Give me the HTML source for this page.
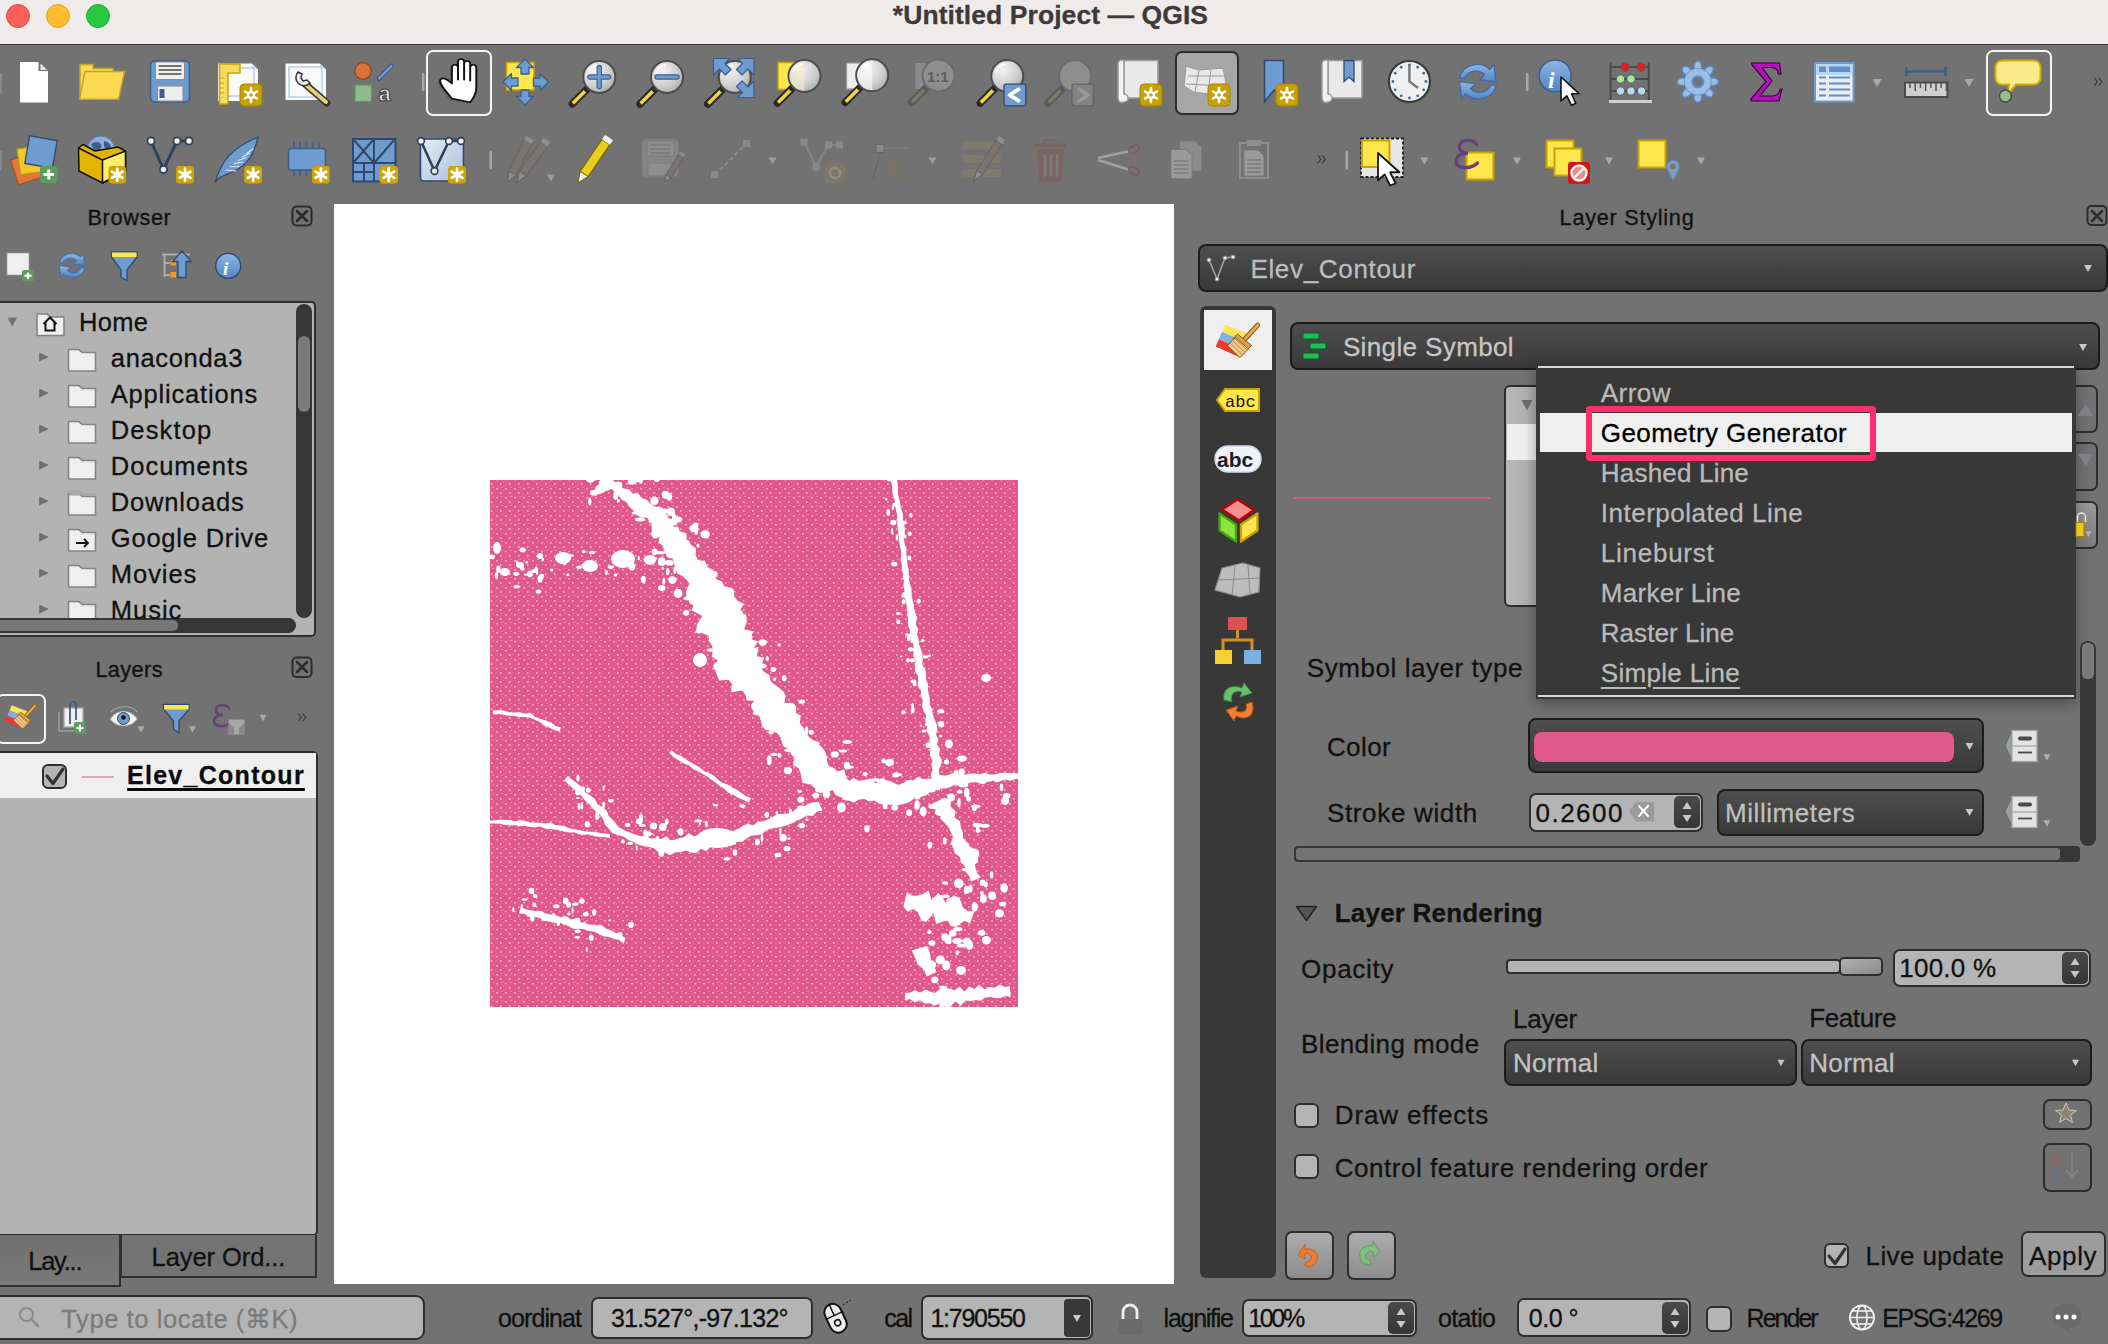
<!DOCTYPE html>
<html><head><meta charset="utf-8">
<title>QGIS</title>
<style>
*{margin:0;padding:0;box-sizing:border-box}
html,body{width:2108px;height:1344px;overflow:hidden}
body{position:relative;background:#727272;font-family:"Liberation Sans",sans-serif;color:#111}
.a{position:absolute}
.t{position:absolute;white-space:nowrap;line-height:1;-webkit-text-stroke:0.3px currentColor}
.tree{position:absolute;background:#b3b3b3;border:2px solid #2f2f2f;border-left:none;border-radius:0 5px 5px 0}
.combo{position:absolute;background:linear-gradient(#4e4e4e,#393939);border:2px solid #1c1c1c;border-radius:8px}
.field{position:absolute;background:#b4b4b4;border:2px solid #2e2e2e;border-radius:7px}
.spin{position:absolute;background:linear-gradient(#4a4a4a,#353535);border-radius:5px}
.cb{position:absolute;width:25px;height:25px;background:#b4b4b4;border:2px solid #2e2e2e;border-radius:6px}
.btn{position:absolute;border:2px solid #2e2e2e;border-radius:7px}
</style></head><body>
<!-- title bar -->
<div class="a" style="left:0;top:0;width:2108px;height:44px;background:#efebeb"></div>
<div class="a" style="left:0;top:44px;width:2108px;height:1px;background:#3a3a3a"></div>
<div class="a" style="left:6px;top:3.7px;width:24px;height:24px;border-radius:50%;background:#fe5f57;border:1px solid #e2463f"></div>
<div class="a" style="left:46px;top:3.7px;width:24px;height:24px;border-radius:50%;background:#febc2e;border:1px solid #e1a325"></div>
<div class="a" style="left:86px;top:3.7px;width:24px;height:24px;border-radius:50%;background:#28c840;border:1px solid #1fac2e"></div>

<!-- toolbar buttons (borders) -->
<div class="a" style="left:426px;top:50px;width:66px;height:66px;border:2.5px solid #f4f4f4;border-radius:7px"></div>
<div class="a" style="left:1175px;top:51px;width:64px;height:64px;background:#a6a6a6;border:2.5px solid #2c2c2c;border-radius:7px"></div>
<div class="a" style="left:1986px;top:50px;width:66px;height:66px;border:2.5px solid #f4f4f4;border-radius:7px"></div>

<!-- map canvas -->
<div class="a" style="left:334px;top:204px;width:840px;height:1080px;background:#fff"></div>

<!-- browser panel -->
<div class="tree" style="left:0;top:301px;width:316px;height:336px"></div>
<div class="a" style="left:296px;top:304px;width:16px;height:314px;background:#363636;border-radius:8px"></div>
<div class="a" style="left:298px;top:336px;width:12px;height:76px;background:#7a7a7a;border-radius:6px"></div>
<div class="a" style="left:0;top:618px;width:296px;height:15px;background:#363636;border-radius:0 8px 8px 0"></div>
<div class="a" style="left:0;top:620px;width:178px;height:11px;background:#777;border-radius:0 5px 5px 0"></div>

<!-- layers panel -->
<div class="a" style="left:-4px;top:694px;width:50px;height:50px;border:2.5px solid #f4f4f4;border-radius:7px"></div>
<div class="tree" style="left:0;top:751px;width:318px;height:485px"></div>
<div class="a" style="left:0;top:753px;width:316px;height:45px;background:#efefef"></div>
<div class="cb" style="left:42px;top:764px"></div>
<div class="a" style="left:82px;top:776px;width:32px;height:2px;background:#e9a3bd"></div>
<div class="a" style="left:-2px;top:1235px;width:123px;height:52px;background:linear-gradient(#6f6f6f,#7a7a7a);border:2px solid #2f2f2f;border-top:none"></div>
<div class="a" style="left:120px;top:1235px;width:197px;height:43px;background:#737373;border:2px solid #2f2f2f;border-top:none"></div>

<!-- status bar -->
<div class="field" style="left:-8px;top:1295px;width:433px;height:45px;border-radius:9px"></div>
<div class="field" style="left:591px;top:1297px;width:222px;height:42px"></div>
<div class="field" style="left:921px;top:1295px;width:172px;height:45px"></div>
<div class="spin" style="left:1064px;top:1299px;width:26px;height:38px;background:#383838;border-radius:4px"></div>
<div class="field" style="left:1242px;top:1299px;width:175px;height:38px"></div>
<div class="spin" style="left:1388px;top:1302px;width:26px;height:32px"></div>
<div class="field" style="left:1517px;top:1298px;width:174px;height:39px"></div>
<div class="spin" style="left:1662px;top:1302px;width:26px;height:32px"></div>
<div class="cb" style="left:1706px;top:1306px;width:26px;height:26px"></div>

<!-- right panel -->
<div class="combo" style="left:1198px;top:244px;width:910px;height:48px"></div>
<div class="a" style="left:1200px;top:306px;width:76px;height:972px;background:#383838;border-radius:6px"></div>
<div class="a" style="left:1204px;top:310px;width:68px;height:60px;background:#efefef"></div>
<div class="combo" style="left:1290px;top:322px;width:810px;height:48px"></div>

<div class="a" style="left:1504px;top:385px;width:60px;height:222px;background:linear-gradient(90deg,#b9b9b9,#a4a4a4);border:2px solid #2e2e2e;border-radius:6px"></div>
<div class="a" style="left:1507px;top:424px;width:40px;height:36px;background:#efefef"></div>
<div class="a" style="left:1294px;top:497px;width:196px;height:2px;background:#d9568a"></div>
<div class="btn" style="left:2040px;top:385px;width:58px;height:48px"></div>
<div class="btn" style="left:2040px;top:442px;width:58px;height:49px"></div>
<div class="btn" style="left:2040px;top:501px;width:58px;height:48px;background:linear-gradient(#9a9a9a,#7c7c7c)"></div>

<!-- popup -->
<div class="a" style="left:1536px;top:365px;width:540px;height:334px;background:#383838;box-shadow:0 4px 14px rgba(0,0,0,.35)"></div>
<div class="a" style="left:1538px;top:366px;width:536px;height:2px;background:#d8d8d8"></div>
<div class="a" style="left:1538px;top:695px;width:536px;height:2px;background:#d8d8d8"></div>
<div class="a" style="left:1540px;top:412.5px;width:532px;height:39.5px;background:#efefef"></div>
<div class="a" style="left:1586px;top:405.5px;width:289.5px;height:55px;border:6px solid #fc2e6e;border-radius:4px"></div>

<div class="a" style="left:2080px;top:641px;width:16px;height:205px;background:#363636;border-radius:8px"></div>
<div class="a" style="left:2082px;top:643px;width:12px;height:36px;background:#7a7a7a;border-radius:5px"></div>

<div class="combo" style="left:1528px;top:718px;width:456px;height:55px"></div>
<div class="a" style="left:1534px;top:732px;width:420px;height:30px;background:#e0598a;border-radius:8px"></div>
<div class="field" style="left:1528.5px;top:792.5px;width:174.5px;height:39px;border-radius:7px"></div>
<div class="spin" style="left:1674px;top:796px;width:26px;height:32px"></div>
<div class="combo" style="left:1717px;top:788.5px;width:267px;height:47px"></div>
<div class="a" style="left:1294px;top:846px;width:786px;height:16px;background:#363636;border-radius:4px"></div>
<div class="a" style="left:1296px;top:848px;width:764px;height:12px;background:#737373;border-radius:3px"></div>

<div class="a" style="left:1506px;top:958.5px;width:335px;height:15px;background:#b3b3b3;border:2px solid #2e2e2e;border-radius:4px"></div>
<div class="a" style="left:1839px;top:956.5px;width:44px;height:19px;background:linear-gradient(160deg,#b0b0b0,#8a8a8a);border:2px solid #2e2e2e;border-radius:5px"></div>
<div class="field" style="left:1892.5px;top:949px;width:198.5px;height:38px"></div>
<div class="spin" style="left:2062px;top:952px;width:26px;height:32px"></div>
<div class="combo" style="left:1504px;top:1038.5px;width:293px;height:47px"></div>
<div class="combo" style="left:1800.5px;top:1038.5px;width:291px;height:47px"></div>
<div class="cb" style="left:1294px;top:1102.5px"></div>
<div class="cb" style="left:1294px;top:1154px"></div>
<div class="btn" style="left:2042.5px;top:1098.5px;width:49px;height:31px"></div>
<div class="btn" style="left:2042.5px;top:1142.5px;width:49px;height:49px"></div>
<div class="btn" style="left:1284.5px;top:1230.5px;width:49px;height:49px;background:linear-gradient(#acacac,#8c8c8c)"></div>
<div class="btn" style="left:1346.5px;top:1230.5px;width:49px;height:49px;background:linear-gradient(#acacac,#8c8c8c)"></div>
<div class="cb" style="left:1824px;top:1242.5px"></div>
<div class="btn" style="left:2021px;top:1231px;width:85px;height:46px;background:#9c9c9c"></div>

<!-- text -->
<div class="t" style="left:892.8px;top:1.7px;font-size:26.5px;font-weight:700;color:#3d3a3a;letter-spacing:0.07px;">*Untitled Project — QGIS</div>
<div class="t" style="left:87.5px;top:207.2px;font-size:21.7px;font-weight:400;color:#111;letter-spacing:0.63px;">Browser</div>
<div class="t" style="left:95.4px;top:659.1px;font-size:21.7px;font-weight:400;color:#111;letter-spacing:0.40px;">Layers</div>
<div class="t" style="left:1559.6px;top:207.2px;font-size:21.7px;font-weight:400;color:#111;letter-spacing:0.73px;">Layer Styling</div>
<div class="t" style="left:78.9px;top:309.5px;font-size:25.5px;font-weight:400;color:#111;letter-spacing:0.36px;">Home</div>
<div class="t" style="left:110.8px;top:345.5px;font-size:25.5px;font-weight:400;color:#111;letter-spacing:0.67px;">anaconda3</div>
<div class="t" style="left:110.8px;top:381.5px;font-size:25.5px;font-weight:400;color:#111;letter-spacing:0.81px;">Applications</div>
<div class="t" style="left:110.8px;top:417.5px;font-size:25.5px;font-weight:400;color:#111;letter-spacing:1.13px;">Desktop</div>
<div class="t" style="left:110.8px;top:453.5px;font-size:25.5px;font-weight:400;color:#111;letter-spacing:1.00px;">Documents</div>
<div class="t" style="left:110.8px;top:489.5px;font-size:25.5px;font-weight:400;color:#111;letter-spacing:0.84px;">Downloads</div>
<div class="t" style="left:110.8px;top:525.5px;font-size:25.5px;font-weight:400;color:#111;letter-spacing:0.79px;">Google Drive</div>
<div class="t" style="left:110.8px;top:561.5px;font-size:25.5px;font-weight:400;color:#111;letter-spacing:0.96px;">Movies</div>
<div class="t" style="left:110.8px;top:597.5px;font-size:25.5px;font-weight:400;color:#111;letter-spacing:0.98px;">Music</div>
<div class="t" style="left:127.0px;top:763.4px;font-size:25px;font-weight:700;color:#0a0a0a;letter-spacing:1.28px;text-decoration:underline;text-underline-offset:4px;text-decoration-thickness:3px">Elev_Contour</div>
<div class="t" style="left:28.2px;top:1249.4px;font-size:25.5px;font-weight:400;color:#111;letter-spacing:-1.22px;">Lay...</div>
<div class="t" style="left:151.6px;top:1244.5px;font-size:25.5px;font-weight:400;color:#111;letter-spacing:-0.07px;">Layer Ord...</div>
<div class="t" style="left:61.3px;top:1306.6px;font-size:25.5px;font-weight:400;color:#7b7b7b;letter-spacing:0.58px;">Type to locate (⌘K)</div>
<div class="t" style="left:498.0px;top:1306.0px;font-size:25px;font-weight:400;color:#101010;letter-spacing:-0.91px;">oordinat</div>
<div class="t" style="left:610.9px;top:1305.8px;font-size:25px;font-weight:400;color:#101010;letter-spacing:-0.70px;">31.527°,-97.132°</div>
<div class="t" style="left:884.2px;top:1305.8px;font-size:25px;font-weight:400;color:#101010;letter-spacing:-1.53px;">cal</div>
<div class="t" style="left:930.4px;top:1305.8px;font-size:25px;font-weight:400;color:#101010;letter-spacing:-1.24px;">1:790550</div>
<div class="t" style="left:1163.6px;top:1305.5px;font-size:25px;font-weight:400;color:#101010;letter-spacing:-1.26px;">lagnifie</div>
<div class="t" style="left:1248.2px;top:1305.5px;font-size:25px;font-weight:400;color:#101010;letter-spacing:-2.32px;">100%</div>
<div class="t" style="left:1438.0px;top:1305.5px;font-size:25px;font-weight:400;color:#101010;letter-spacing:-0.63px;">otatio</div>
<div class="t" style="left:1528.8px;top:1305.5px;font-size:25px;font-weight:400;color:#101010;letter-spacing:-0.50px;">0.0 °</div>
<div class="t" style="left:1746.6px;top:1305.5px;font-size:25px;font-weight:400;color:#101010;letter-spacing:-1.98px;">Render</div>
<div class="t" style="left:1882.2px;top:1305.5px;font-size:25px;font-weight:400;color:#101010;letter-spacing:-1.37px;">EPSG:4269</div>
<div class="t" style="left:1250.4px;top:256.0px;font-size:26px;font-weight:400;color:#bdbdbd;letter-spacing:0.68px;">Elev_Contour</div>
<div class="t" style="left:1342.9px;top:334.4px;font-size:26px;font-weight:400;color:#c6c6c6;letter-spacing:0.38px;">Single Symbol</div>
<div class="t" style="left:1600.8px;top:379.9px;font-size:26px;font-weight:400;color:#bababa;letter-spacing:0.47px;">Arrow</div>
<div class="t" style="left:1600.8px;top:419.6px;font-size:26px;font-weight:400;color:#000;letter-spacing:0.44px;">Geometry Generator</div>
<div class="t" style="left:1600.8px;top:459.9px;font-size:26px;font-weight:400;color:#bababa;letter-spacing:0.20px;">Hashed Line</div>
<div class="t" style="left:1600.8px;top:499.9px;font-size:26px;font-weight:400;color:#bababa;letter-spacing:0.51px;">Interpolated Line</div>
<div class="t" style="left:1600.8px;top:539.9px;font-size:26px;font-weight:400;color:#bababa;letter-spacing:0.75px;">Lineburst</div>
<div class="t" style="left:1600.8px;top:579.9px;font-size:26px;font-weight:400;color:#bababa;letter-spacing:0.27px;">Marker Line</div>
<div class="t" style="left:1600.8px;top:619.9px;font-size:26px;font-weight:400;color:#bababa;letter-spacing:0.04px;">Raster Line</div>
<div class="t" style="left:1600.8px;top:659.9px;font-size:26px;font-weight:400;color:#bababa;letter-spacing:0.31px;text-decoration:underline;text-underline-offset:5px;text-decoration-thickness:2px">Simple Line</div>
<div class="t" style="left:1306.8px;top:655.4px;font-size:26px;font-weight:400;color:#111;letter-spacing:0.56px;">Symbol layer type</div>
<div class="t" style="left:1326.9px;top:734.2px;font-size:26px;font-weight:400;color:#111;letter-spacing:0.41px;">Color</div>
<div class="t" style="left:1326.9px;top:799.5px;font-size:26px;font-weight:400;color:#111;letter-spacing:0.67px;">Stroke width</div>
<div class="t" style="left:1535.5px;top:799.5px;font-size:26px;font-weight:400;color:#111;letter-spacing:1.49px;">0.2600</div>
<div class="t" style="left:1725.0px;top:800.0px;font-size:26px;font-weight:400;color:#bfbfbf;letter-spacing:0.56px;">Millimeters</div>
<div class="t" style="left:1334.8px;top:900.2px;font-size:26px;font-weight:700;color:#111;letter-spacing:0.19px;">Layer Rendering</div>
<div class="t" style="left:1301.0px;top:956.0px;font-size:26px;font-weight:400;color:#111;letter-spacing:0.74px;">Opacity</div>
<div class="t" style="left:1899.3px;top:954.8px;font-size:26px;font-weight:400;color:#111;letter-spacing:0.22px;">100.0 %</div>
<div class="t" style="left:1513.0px;top:1006.4px;font-size:26px;font-weight:400;color:#111;letter-spacing:-0.21px;">Layer</div>
<div class="t" style="left:1809.3px;top:1005.2px;font-size:26px;font-weight:400;color:#111;letter-spacing:-0.42px;">Feature</div>
<div class="t" style="left:1301.0px;top:1031.0px;font-size:26px;font-weight:400;color:#111;letter-spacing:0.39px;">Blending mode</div>
<div class="t" style="left:1513.0px;top:1050.0px;font-size:26px;font-weight:400;color:#c2c2c2;letter-spacing:0.30px;">Normal</div>
<div class="t" style="left:1809.3px;top:1050.2px;font-size:26px;font-weight:400;color:#c2c2c2;letter-spacing:0.30px;">Normal</div>
<div class="t" style="left:1334.8px;top:1102.3px;font-size:26px;font-weight:400;color:#111;letter-spacing:0.85px;">Draw effects</div>
<div class="t" style="left:1334.8px;top:1155.3px;font-size:26px;font-weight:400;color:#111;letter-spacing:0.53px;">Control feature rendering order</div>
<div class="t" style="left:1865.6px;top:1242.6px;font-size:26px;font-weight:400;color:#111;letter-spacing:0.39px;">Live update</div>
<div class="t" style="left:2029.0px;top:1242.6px;font-size:26px;font-weight:400;color:#111;letter-spacing:0.64px;">Apply</div>
<svg class="a" style="left:0;top:0" width="2108" height="1344" viewBox="0 0 2108 1344">
<defs><radialGradient id="lens" cx="0.35" cy="0.3" r="0.8"><stop offset="0" stop-color="#f4f4f4"/><stop offset="0.6" stop-color="#cfcfcf"/><stop offset="1" stop-color="#a9a9a9"/></radialGradient><linearGradient id="blueg" x1="0" y1="0" x2="0" y2="1"><stop offset="0" stop-color="#8fb5e3"/><stop offset="1" stop-color="#4f86c6"/></linearGradient><linearGradient id="lbox" x1="0" y1="0" x2="1" y2="1"><stop offset="0" stop-color="#e4ebf5"/><stop offset="1" stop-color="#a9c0dd"/></linearGradient><clipPath id="treeclip"><rect x="0" y="300" width="300" height="318"/></clipPath></defs>
<rect x="-1" y="73" width="3" height="20" rx="1" fill="#8a8a8a"/><rect x="-1" y="151" width="3" height="20" rx="1" fill="#8a8a8a"/>
<path d="M20,62 H38.5 V71 H48 V102.4 H20 Z" fill="#fff"/>
<path d="M40.5,63.5 L47,70 H40.5 Z" fill="#e6e6e6"/>
<path d="M80,64.5 H93 V68.5 H113 V99 H80 Z" fill="#fcd94e" stroke="#c5a42a" stroke-width="1.5"/>
<path d="M85,71.5 H124.5 L118.5,99.3 H79.5 Z" fill="#fdda52" stroke="#c5a42a" stroke-width="1.5"/>
<rect x="150.5" y="61" width="39" height="41" rx="4.5" fill="#6e9bcd" stroke="#3d5f8a" stroke-width="1.6"/>
<rect x="155.5" y="62" width="29" height="17.5" rx="1.5" fill="#efefef" stroke="#8a8a8a" stroke-width="1"/>
<g stroke="#555" stroke-width="1.6"><line x1="158.5" y1="66" x2="181.5" y2="66"/><line x1="158.5" y1="70" x2="181.5" y2="70"/><line x1="158.5" y1="74" x2="181.5" y2="74"/></g>
<rect x="157.5" y="86" width="25.5" height="15" rx="1" fill="#ececec" stroke="#8a8a8a" stroke-width="1"/>
<rect x="159.5" y="89" width="5" height="9" fill="#3d5f8a"/>
<path d="M218,63.5 H252 L258,69.5 V101 H218 Z" fill="#fafafa"/>
<path d="M252,64 L257.5,69.5 H252 Z" fill="#dcdcdc"/>
<rect x="223" y="68" width="31" height="28" fill="none" stroke="#b9cdf0" stroke-width="1.5"/>
<path d="M219.5,64 H240 V73 H228 V104 H219.5 Z" fill="#f6dc66" stroke="#c9a400" stroke-width="1.5"/>
<g stroke="#c9a400" stroke-width="1"><line x1="220" y1="78" x2="224" y2="78"/><line x1="220" y1="83" x2="224" y2="83"/><line x1="220" y1="88" x2="224" y2="88"/><line x1="220" y1="93" x2="224" y2="93"/></g>
<rect x="240" y="84" width="22" height="22" rx="4" fill="#c9a000" stroke="#a78400" stroke-width="1"/>
<g stroke="#fff" stroke-width="2.6" stroke-linecap="round"><line x1="251.0" y1="88.0" x2="251.0" y2="102.0"/><line x1="245.0" y1="91.5" x2="257.0" y2="98.5"/><line x1="245.0" y1="98.5" x2="257.0" y2="91.5"/></g>
<circle cx="251.0" cy="95.0" r="4.2" fill="#fff"/><circle cx="251.0" cy="95.0" r="1.8" fill="#c9a000"/>
<path d="M285.5,63.5 H320 L326,69.5 V100 H285.5 Z" fill="#fafafa"/>
<path d="M320,64 L325.5,69.5 H320 Z" fill="#dcdcdc"/>
<rect x="289" y="67" width="33" height="30" fill="none" stroke="#b9cdf0" stroke-width="1.5"/>
<path d="M305,84 L327,103" stroke="#333" stroke-width="7" stroke-linecap="round"/><path d="M306,85 L326,102" stroke="#e8cf70" stroke-width="4" stroke-linecap="round"/>
<path d="M298,72 a8,8 0 1 0 12,11 l-3,-3 l-4,1 l-2,-3 l1,-4 Z" fill="#eee" stroke="#333" stroke-width="1.5"/>
<circle cx="363" cy="71" r="8.3" fill="#d8713a" stroke="#86461f" stroke-width="1.3"/>
<line x1="379" y1="78.5" x2="391.5" y2="66" stroke="#2f4a6e" stroke-width="4.5" stroke-linecap="round"/><line x1="379" y1="78.5" x2="391.5" y2="66" stroke="#6f9dd3" stroke-width="2.5" stroke-linecap="round"/>
<rect x="355" y="85" width="16.5" height="16.5" fill="#8fbc8f" stroke="#5a9a5a" stroke-width="1.3"/>
<text x="378.5" y="101" font-family="Liberation Sans" font-weight="bold" font-size="22" fill="#e8e8e8" stroke="#3a3a3a" stroke-width="1">a</text>
<rect x="422" y="73" width="2.5" height="18" rx="1.2" fill="#a7a7a7"/>
<g transform="translate(458.3,80.2) scale(1.22,0.94) translate(-452.25,-80.5)"><path d="M447,100 C442,92 436,84 437.5,80 C439,77 443,79 447,84 L447,67 C447,63 452,63 452,67 L452,80 L452,61 C452,57 457,57 457,61 L457,80 L457,63 C457,59 462,59 462,63 L462,81 L462,67 C462,63 467,63 467,67 L467,89 C467,96 464,100 462,104 Z" fill="#666" transform="translate(-2,2)"/><path d="M447,100 C442,92 436,84 437.5,80 C439,77 443,79 447,84 L447,67 C447,63 452,63 452,67 L452,80 L452,61 C452,57 457,57 457,61 L457,80 L457,63 C457,59 462,59 462,63 L462,81 L462,67 C462,63 467,63 467,67 L467,89 C467,96 464,100 462,104 Z" fill="#fff" stroke="#111" stroke-width="1.6" stroke-linejoin="round"/></g>
<rect x="506.5" y="62.5" width="27.5" height="27.5" fill="#fde74c" stroke="#c9a400" stroke-width="1.5"/>
<g fill="#6e9bd0" stroke="#3d5f8a" stroke-width="1.3" stroke-linejoin="round"><path d="M525,59 L533.5,67.5 H529 V74 H521 V67.5 H516.5 Z"/><path d="M525,105 L533.5,96.5 H529 V90 H521 V96.5 H516.5 Z"/><path d="M503,82 L511.5,73.5 V78 H518 V86 H511.5 V90.5 Z"/><path d="M548.5,82 L540,73.5 V78 H533.5 V86 H540 V90.5 Z"/></g>
<line x1="572.3" y1="103.9" x2="586.8" y2="89.4" stroke="#2a2a2a" stroke-width="7.5" stroke-linecap="round"/>
<line x1="572.9" y1="103.30000000000001" x2="585.3" y2="90.9" stroke="#f3d43a" stroke-width="3.5"/>
<circle cx="587.3" cy="88.9" r="3.3" fill="#2a2a2a"/>
<circle cx="599.3" cy="76.9" r="16" fill="url(#lens)" stroke="#4d4d4d" stroke-width="2"/>
<path d="M588.0999999999999,73.7 A12.0,12.0 0 0 1 597.6999999999999,64.9" stroke="#fff" stroke-width="2" fill="none" opacity="0.8"/>
<g stroke="#3d5f8a" stroke-width="5.5" stroke-linecap="round"><line x1="590" y1="77" x2="608.5" y2="77"/><line x1="599.3" y1="67.5" x2="599.3" y2="86.5"/></g>
<g stroke="#6e9bd0" stroke-width="3.2" stroke-linecap="round"><line x1="590" y1="77" x2="608.5" y2="77"/><line x1="599.3" y1="67.5" x2="599.3" y2="86.5"/></g>
<line x1="640.0" y1="104.0" x2="654.5" y2="89.5" stroke="#2a2a2a" stroke-width="7.5" stroke-linecap="round"/>
<line x1="640.6" y1="103.4" x2="653.0" y2="91.0" stroke="#f3d43a" stroke-width="3.5"/>
<circle cx="655.0" cy="89.0" r="3.3" fill="#2a2a2a"/>
<circle cx="667" cy="77" r="16" fill="url(#lens)" stroke="#4d4d4d" stroke-width="2"/>
<path d="M655.8,73.8 A12.0,12.0 0 0 1 665.4,65.0" stroke="#fff" stroke-width="2" fill="none" opacity="0.8"/>
<line x1="657" y1="77" x2="677" y2="77" stroke="#3d5f8a" stroke-width="5.5" stroke-linecap="round"/><line x1="657" y1="77" x2="677" y2="77" stroke="#6e9bd0" stroke-width="3.2" stroke-linecap="round"/>
<line x1="707.8" y1="104.0" x2="722.3" y2="89.5" stroke="#2a2a2a" stroke-width="7.5" stroke-linecap="round"/>
<line x1="708.4" y1="103.4" x2="720.8" y2="91.0" stroke="#f3d43a" stroke-width="3.5"/>
<circle cx="722.8" cy="89.0" r="3.3" fill="#2a2a2a"/>
<circle cx="734.8" cy="77" r="16" fill="url(#lens)" stroke="#4d4d4d" stroke-width="2"/>
<path d="M723.5999999999999,73.8 A12.0,12.0 0 0 1 733.1999999999999,65.0" stroke="#fff" stroke-width="2" fill="none" opacity="0.8"/>
<g fill="#6e9bd0" stroke="#3d5f8a" stroke-width="1.2" stroke-linejoin="round"><path d="M713.5,58.5 H730 L725,63.5 L731,69.5 L725.5,75 L719.5,69 L713.5,75 Z"/><path d="M754,58.5 H737.5 L742.5,63.5 L736.5,69.5 L742,75 L748,69 L754,75 Z"/><path d="M754,97.5 H737.5 L742.5,92.5 L736.5,86.5 L742,81 L748,87 L754,81 Z"/></g>
<rect x="778" y="62.5" width="20" height="27" fill="#fde74c" stroke="#c9a400" stroke-width="1.5"/>
<line x1="777.5" y1="103.0" x2="792.0" y2="88.5" stroke="#2a2a2a" stroke-width="7.5" stroke-linecap="round"/>
<line x1="778.1" y1="102.4" x2="790.5" y2="90.0" stroke="#f3d43a" stroke-width="3.5"/>
<circle cx="792.5" cy="88.0" r="3.3" fill="#2a2a2a"/>
<circle cx="804.5" cy="76" r="16" fill="url(#lens)" stroke="#4d4d4d" stroke-width="2"/>
<path d="M804.5,61 A15,15 0 0 0 804.5,91 Z" fill="#f5eccc" opacity="0.55"/>
<path d="M793.3,72.8 A12.0,12.0 0 0 1 802.9,64.0" stroke="#fff" stroke-width="2" fill="none" opacity="0.8"/>
<rect x="846.5" y="63" width="24" height="26" fill="#eee" stroke="#9a9a9a" stroke-width="1.2"/>
<line x1="845.2" y1="102.3" x2="859.7" y2="87.8" stroke="#2a2a2a" stroke-width="7.5" stroke-linecap="round"/>
<line x1="845.8000000000001" y1="101.7" x2="858.2" y2="89.3" stroke="#f3d43a" stroke-width="3.5"/>
<circle cx="860.2" cy="87.3" r="3.3" fill="#2a2a2a"/>
<circle cx="872.2" cy="75.3" r="16" fill="url(#lens)" stroke="#4d4d4d" stroke-width="2"/>
<path d="M872.2,60.3 A15,15 0 0 0 872.2,90.3 Z" fill="#ffffff" opacity="0.55"/>
<path d="M861.0,72.1 A12.0,12.0 0 0 1 870.6,63.3" stroke="#fff" stroke-width="2" fill="none" opacity="0.8"/>
<rect x="915.5" y="63" width="22" height="26" fill="#8c8c8c"/>
<line x1="911.5" y1="102.5" x2="926.0" y2="88.0" stroke="#5a5a5a" stroke-width="7.5" stroke-linecap="round"/>
<line x1="912.1" y1="101.9" x2="924.5" y2="89.5" stroke="#7d7a6a" stroke-width="3.5"/>
<circle cx="926.5" cy="87.5" r="3.3" fill="#5a5a5a"/>
<circle cx="938.5" cy="75.5" r="16" fill="#8e8e8e" stroke="#6c6c6c" stroke-width="2"/>
<text x="927" y="82" font-family="Liberation Sans" font-weight="bold" font-size="15" fill="#5e5e5e">1:1</text>
<line x1="980.3" y1="103.0" x2="994.8" y2="88.5" stroke="#2a2a2a" stroke-width="7.5" stroke-linecap="round"/>
<line x1="980.9" y1="102.4" x2="993.3" y2="90.0" stroke="#f3d43a" stroke-width="3.5"/>
<circle cx="995.3" cy="88.0" r="3.3" fill="#2a2a2a"/>
<circle cx="1007.3" cy="76" r="16" fill="url(#lens)" stroke="#4d4d4d" stroke-width="2"/>
<path d="M996.0999999999999,72.8 A12.0,12.0 0 0 1 1005.6999999999999,64.0" stroke="#fff" stroke-width="2" fill="none" opacity="0.8"/>
<rect x="1004" y="84.2" width="21.8" height="21.6" rx="2" fill="#6e9bd0" stroke="#2f4a6e" stroke-width="1.3"/>
<path d="M1020,88.5 L1009.5,95 L1020,101.5" fill="none" stroke="#fff" stroke-width="3.8" stroke-linejoin="round"/>
<line x1="1048.0" y1="103.0" x2="1062.5" y2="88.5" stroke="#5a5a5a" stroke-width="7.5" stroke-linecap="round"/>
<line x1="1048.6" y1="102.4" x2="1061.0" y2="90.0" stroke="#7d7a6a" stroke-width="3.5"/>
<circle cx="1063.0" cy="88.0" r="3.3" fill="#5a5a5a"/>
<circle cx="1075" cy="76" r="16" fill="#8e8e8e" stroke="#6c6c6c" stroke-width="2"/>
<rect x="1072" y="84.2" width="21.4" height="21.6" rx="2" fill="#838383" stroke="#626262" stroke-width="1.3"/>
<path d="M1078,88.5 L1088,95 L1078,101.5" fill="none" stroke="#9a9a9a" stroke-width="3.5"/>
<path d="M1124,60.5 H1158 V98 H1124 Z" fill="#e9e9e9" stroke="#9a9a9a" stroke-width="1.5"/>
<path d="M1124,60.5 a4,4 0 0 0 -6,3 V98 a4,4 0 0 0 6,4 a4,4 0 0 0 0,-8 Z" fill="#f2f2f2" stroke="#9a9a9a" stroke-width="1.5"/>
<rect x="1140" y="84" width="22" height="22" rx="4" fill="#c9a000" stroke="#a78400" stroke-width="1"/>
<g stroke="#fff" stroke-width="2.6" stroke-linecap="round"><line x1="1151.0" y1="88.0" x2="1151.0" y2="102.0"/><line x1="1145.0" y1="91.5" x2="1157.0" y2="98.5"/><line x1="1145.0" y1="98.5" x2="1157.0" y2="91.5"/></g>
<circle cx="1151.0" cy="95.0" r="4.2" fill="#fff"/><circle cx="1151.0" cy="95.0" r="1.8" fill="#c9a000"/>
<path d="M1186,66 L1199,70 L1223,68 L1226,82 L1222,96 L1193,92 L1184,86 Z" fill="#e8e8e8" stroke="#9a9a9a" stroke-width="1.2"/>
<g stroke="#9a9a9a" stroke-width="1" fill="none"><path d="M1188,76 L1224,76"/><path d="M1186,84 L1224,86"/><path d="M1199,70 L1195,92"/><path d="M1211,69 L1208,94"/></g>
<rect x="1208" y="84" width="22" height="22" rx="4" fill="#c9a000" stroke="#a78400" stroke-width="1"/>
<g stroke="#fff" stroke-width="2.6" stroke-linecap="round"><line x1="1219.0" y1="88.0" x2="1219.0" y2="102.0"/><line x1="1213.0" y1="91.5" x2="1225.0" y2="98.5"/><line x1="1213.0" y1="98.5" x2="1225.0" y2="91.5"/></g>
<circle cx="1219.0" cy="95.0" r="4.2" fill="#fff"/><circle cx="1219.0" cy="95.0" r="1.8" fill="#c9a000"/>
<path d="M1264.5,60.5 H1283.5 V98 L1274,90 L1264.5,102 Z" fill="#6e9bd0" stroke="#2f4a6e" stroke-width="1.5"/>
<rect x="1276" y="84" width="22" height="22" rx="4" fill="#c9a000" stroke="#a78400" stroke-width="1"/>
<g stroke="#fff" stroke-width="2.6" stroke-linecap="round"><line x1="1287.0" y1="88.0" x2="1287.0" y2="102.0"/><line x1="1281.0" y1="91.5" x2="1293.0" y2="98.5"/><line x1="1281.0" y1="98.5" x2="1293.0" y2="91.5"/></g>
<circle cx="1287.0" cy="95.0" r="4.2" fill="#fff"/><circle cx="1287.0" cy="95.0" r="1.8" fill="#c9a000"/>
<path d="M1328,60.5 H1362 V98 H1328 Z" fill="#e9e9e9" stroke="#9a9a9a" stroke-width="1.5"/>
<path d="M1328,60.5 a4,4 0 0 0 -6,3 V98 a4,4 0 0 0 6,4 a4,4 0 0 0 0,-8 Z" fill="#f2f2f2" stroke="#9a9a9a" stroke-width="1.5"/>
<path d="M1344,60.5 H1354 V81.5 L1349,77 L1344,81.5 Z" fill="#6e9bd0" stroke="#2f4a6e" stroke-width="1.3"/>
<circle cx="1409.4" cy="81.5" r="20.5" fill="#efefef" stroke="#3a3a3a" stroke-width="2.2"/>
<circle cx="1409.4" cy="65.0" r="1.4" fill="#3d6aa8"/>
<circle cx="1417.7" cy="67.2" r="1.4" fill="#3d6aa8"/>
<circle cx="1423.7" cy="73.2" r="1.4" fill="#3d6aa8"/>
<circle cx="1425.9" cy="81.5" r="1.4" fill="#3d6aa8"/>
<circle cx="1423.7" cy="89.8" r="1.4" fill="#3d6aa8"/>
<circle cx="1417.7" cy="95.8" r="1.4" fill="#3d6aa8"/>
<circle cx="1409.4" cy="98.0" r="1.4" fill="#3d6aa8"/>
<circle cx="1401.2" cy="95.8" r="1.4" fill="#3d6aa8"/>
<circle cx="1395.1" cy="89.8" r="1.4" fill="#3d6aa8"/>
<circle cx="1392.9" cy="81.5" r="1.4" fill="#3d6aa8"/>
<circle cx="1395.1" cy="73.2" r="1.4" fill="#3d6aa8"/>
<circle cx="1401.2" cy="67.2" r="1.4" fill="#3d6aa8"/>
<path d="M1409.4,64 V81.5 L1418,88" fill="none" stroke="#777" stroke-width="2.4"/>
<g transform="translate(1457.5,61.5) scale(1.01)"><path d="M2,16 C4,4 22,-2 32,8 L36,3 L38,20 L22,18 L27,13 C20,7 10,9 7,17 Z" fill="url(#blueg)" stroke="#3d6aa8" stroke-width="1.3"/><path d="M38,24 C36,36 18,42 8,32 L4,37 L2,20 L18,22 L13,27 C20,33 30,31 33,23 Z" fill="url(#blueg)" stroke="#3d6aa8" stroke-width="1.3"/></g>
<rect x="1526" y="73" width="2.5" height="18" rx="1.2" fill="#a7a7a7"/>
<circle cx="1555.2" cy="75.9" r="16" fill="url(#blueg)" stroke="#3d5f8a" stroke-width="1.5"/>
<text x="1548" y="88" font-family="Liberation Serif" font-style="italic" font-weight="bold" font-size="24" fill="#fff">i</text>
<path d="M1561,77 L1561,100 L1566.5,95 L1571,104 L1575,102 L1571,93 L1578.5,93 Z" fill="#fff" stroke="#111" stroke-width="1.5" stroke-linejoin="round" transform="translate(1561,77) scale(1.05) translate(-1561,-77)"/>
<g stroke="#4a4a4a" stroke-width="2"><line x1="1610.6" y1="62" x2="1610.6" y2="101"/><line x1="1648.8" y1="62" x2="1648.8" y2="101"/><line x1="1610.6" y1="67" x2="1648.8" y2="67"/><line x1="1610.6" y1="79" x2="1648.8" y2="79"/><line x1="1610.6" y1="91" x2="1648.8" y2="91"/></g>
<rect x="1609" y="100" width="43" height="3" fill="#cfcfcf"/>
<circle cx="1625" cy="67" r="4.2" fill="#e02020" stroke="#5a5a5a" stroke-width="1"/>
<circle cx="1641" cy="67" r="4.2" fill="#e02020" stroke="#5a5a5a" stroke-width="1"/>
<circle cx="1620.5" cy="79" r="4.2" fill="#a8e6a0" stroke="#5a5a5a" stroke-width="1"/>
<circle cx="1631" cy="79" r="4.2" fill="#a8e6a0" stroke="#5a5a5a" stroke-width="1"/>
<circle cx="1620.5" cy="91" r="4.2" fill="#b8d8f0" stroke="#5a5a5a" stroke-width="1"/>
<circle cx="1631" cy="91" r="4.2" fill="#b8d8f0" stroke="#5a5a5a" stroke-width="1"/>
<circle cx="1641.5" cy="91" r="4.2" fill="#b8d8f0" stroke="#5a5a5a" stroke-width="1"/>
<g fill="#9dbde6" stroke="#5b8fd0" stroke-width="1.5"><ellipse cx="1697.8" cy="66.8" rx="3.8" ry="5.5" transform="rotate(0 1697.8 66.8)"/><ellipse cx="1708.4" cy="71.2" rx="3.8" ry="5.5" transform="rotate(45 1708.4 71.2)"/><ellipse cx="1712.8" cy="81.8" rx="3.8" ry="5.5" transform="rotate(90 1712.8 81.8)"/><ellipse cx="1708.4" cy="92.4" rx="3.8" ry="5.5" transform="rotate(135 1708.4 92.4)"/><ellipse cx="1697.8" cy="96.8" rx="3.8" ry="5.5" transform="rotate(180 1697.8 96.8)"/><ellipse cx="1687.2" cy="92.4" rx="3.8" ry="5.5" transform="rotate(225 1687.2 92.4)"/><ellipse cx="1682.8" cy="81.8" rx="3.8" ry="5.5" transform="rotate(270 1682.8 81.8)"/><ellipse cx="1687.2" cy="71.2" rx="3.8" ry="5.5" transform="rotate(315 1687.2 71.2)"/><circle cx="1697.8" cy="81.8" r="13"/></g>
<circle cx="1697.8" cy="81.8" r="13" fill="#9dbde6"/>
<circle cx="1697.8" cy="81.8" r="5.5" fill="#727272" stroke="#5b8fd0" stroke-width="2"/>
<path d="M1751.5,63 H1779.5 L1781,74 H1778.5 C1777,68 1775,67.5 1770,67.5 H1762 L1772,81 L1760,96 H1772 C1777,96 1779,94 1780.5,89 H1782 L1779,101 H1751 V99 L1766,81.5 L1752,65 Z" fill="#b012b8" stroke="#3a003d" stroke-width="1.2"/>
<rect x="1815" y="63" width="38.5" height="38.5" fill="#ececec" stroke="#6e9bd0" stroke-width="2"/>
<rect x="1816" y="64" width="36.5" height="11" fill="#b8d6f0"/>
<rect x="1819" y="66.5" width="7" height="5.5" fill="#5f8fcf"/><rect x="1829" y="66.5" width="21" height="5.5" fill="#5f8fcf"/>
<g stroke="#5f8fcf" stroke-width="2"><line x1="1819" y1="77.5" x2="1826" y2="77.5"/><line x1="1829" y1="77.5" x2="1850" y2="77.5"/><line x1="1819" y1="83.5" x2="1826" y2="83.5"/><line x1="1829" y1="83.5" x2="1850" y2="83.5"/><line x1="1819" y1="89.5" x2="1826" y2="89.5"/><line x1="1829" y1="89.5" x2="1850" y2="89.5"/><line x1="1819" y1="95.5" x2="1826" y2="95.5"/><line x1="1829" y1="95.5" x2="1850" y2="95.5"/></g>
<path d="M1872.5,79.0 H1881.5 L1877,87.0 Z" fill="#a9a9a9"/>
<g stroke="#3d5f8a" stroke-width="2.5"><line x1="1906" y1="71.5" x2="1946" y2="71.5"/><line x1="1906.5" y1="67" x2="1906.5" y2="76"/><line x1="1945.5" y1="67" x2="1945.5" y2="76"/></g>
<rect x="1905" y="82.5" width="42.5" height="14.5" fill="#cfcfcf" stroke="#4a4a4a" stroke-width="2"/>
<g stroke="#555" stroke-width="1.5"><line x1="1910.0" y1="83" x2="1910.0" y2="88"/><line x1="1915.2" y1="83" x2="1915.2" y2="91"/><line x1="1920.4" y1="83" x2="1920.4" y2="88"/><line x1="1925.6" y1="83" x2="1925.6" y2="91"/><line x1="1930.8" y1="83" x2="1930.8" y2="88"/><line x1="1936.0" y1="83" x2="1936.0" y2="91"/><line x1="1941.2" y1="83" x2="1941.2" y2="88"/><line x1="1946.4" y1="83" x2="1946.4" y2="91"/></g>
<path d="M1964.5,79.0 H1973.5 L1969,87.0 Z" fill="#a9a9a9"/>
<path d="M2002,60.5 H2034 a6.5,6.5 0 0 1 6.5,6.5 V78 a6.5,6.5 0 0 1 -6.5,6.5 H2016 L2008,94 L2009,84.5 H2002 a6.5,6.5 0 0 1 -6.5,-6.5 V67 a6.5,6.5 0 0 1 6.5,-6.5 Z" fill="#faea8e" stroke="#d4ac00" stroke-width="2"/>
<circle cx="2005.4" cy="96" r="6" fill="#8fc18f" stroke="#4a4a4a" stroke-width="1.5"/>
<path d="M2094.5,78 L2097.3,81.75 L2094.5,85.5 M2099.0,78 L2101.8,81.75 L2099.0,85.5" fill="none" stroke="#333" stroke-width="1.15" stroke-linecap="round" stroke-linejoin="round"/>
<rect x="14" y="146" width="26" height="26" fill="#e07a3a" stroke="#a4521f" stroke-width="1.2" transform="rotate(-18 27 159) translate(-3,9)"/>
<rect x="19" y="143" width="26" height="26" fill="#f3c62c" stroke="#b89412" stroke-width="1.2" transform="rotate(-8 32 156) translate(-1,4)"/>
<rect x="27" y="138" width="28" height="28" fill="#6e9bd0" stroke="#2f4a6e" stroke-width="1.3" transform="rotate(10 41 152)"/>
<rect x="40" y="166" width="17.6" height="17" rx="3" fill="#5e9b5e"/><g stroke="#fff" stroke-width="3"><line x1="43.5" y1="174.5" x2="54" y2="174.5"/><line x1="48.8" y1="169.5" x2="48.8" y2="179.5"/></g>
<circle cx="101" cy="150" r="14" fill="#8fb0d8" stroke="#4f77a8" stroke-width="1"/>
<path d="M91,144 q6,-4 10,0 q2,4 -3,6 q-4,2 -7,-6 Z M104,141 q6,1 7,6 q-3,3 -7,0 Z M99,154 q5,0 5,6 q-3,2 -5,-6Z" fill="#3d5f8a"/>
<path d="M78.5,148 L83,144.5 L95,151 L118,147 L125.5,151 V171 L102.5,183 L79,171 Z" fill="#e2b400" stroke="#111" stroke-width="1.5" stroke-linejoin="round"/>
<path d="M102.5,160 L125.5,151 V171 L102.5,183 Z" fill="#fdf06a" stroke="#111" stroke-width="1.5" stroke-linejoin="round"/>
<path d="M78.5,148 L102.5,160" stroke="#111" stroke-width="1.5"/>
<rect x="108.5" y="166" width="17.5" height="17.5" rx="3.5" fill="#cfa500"/>
<g stroke="#fff" stroke-width="2.8" stroke-linecap="round"><line x1="117.25" y1="168.8" x2="117.25" y2="180.7"/><line x1="112.0735" y1="171.775" x2="122.4265" y2="177.725"/><line x1="112.0735" y1="177.725" x2="122.4265" y2="171.775"/></g>
<path d="M151,141 L163.5,169.5 L177,141 L189,141" fill="none" stroke="#2f4058" stroke-width="3"/>
<circle cx="151" cy="141" r="3.6" fill="#eee" stroke="#2f4058" stroke-width="1.8"/>
<circle cx="163.5" cy="169.5" r="3.6" fill="#eee" stroke="#2f4058" stroke-width="1.8"/>
<circle cx="177" cy="141" r="3.6" fill="#eee" stroke="#2f4058" stroke-width="1.8"/>
<circle cx="189" cy="141" r="3.6" fill="#eee" stroke="#2f4058" stroke-width="1.8"/>
<rect x="176" y="166" width="18" height="17.5" rx="3.5" fill="#cfa500"/>
<g stroke="#fff" stroke-width="2.8" stroke-linecap="round"><line x1="185.0" y1="168.63" x2="185.0" y2="180.87"/><line x1="179.6756" y1="171.69" x2="190.3244" y2="177.81"/><line x1="179.6756" y1="177.81" x2="190.3244" y2="171.69"/></g>
<path d="M215,182 C222,160 232,148 258,137 C255,150 250,165 232,172 C228,174 222,176 219,178 Z" fill="#6e9bd0" stroke="#2f4a6e" stroke-width="1.3"/>
<g stroke="#dfe9f5" stroke-width="1.1"><line x1="226" y1="170.0" x2="236.0" y2="171.0"/><line x1="230" y1="166.8" x2="239.5" y2="166.5"/><line x1="234" y1="163.6" x2="243.0" y2="162.0"/><line x1="238" y1="160.4" x2="246.5" y2="157.5"/><line x1="242" y1="157.2" x2="250.0" y2="153.0"/><line x1="246" y1="154.0" x2="253.5" y2="148.5"/></g>
<rect x="244.3" y="166" width="17.7" height="17.5" rx="3.5" fill="#cfa500"/>
<g stroke="#fff" stroke-width="2.8" stroke-linecap="round"><line x1="253.15" y1="168.732" x2="253.15" y2="180.768"/><line x1="247.91434" y1="171.741" x2="258.38566000000003" y2="177.759"/><line x1="247.91434" y1="177.759" x2="258.38566000000003" y2="171.741"/></g>
<g stroke="#3d5f8a" stroke-width="1.6"><line x1="294.0" y1="141.5" x2="294.0" y2="176"/><line x1="300.2" y1="141.5" x2="300.2" y2="176"/><line x1="306.4" y1="141.5" x2="306.4" y2="176"/><line x1="312.6" y1="141.5" x2="312.6" y2="176"/><line x1="318.8" y1="141.5" x2="318.8" y2="176"/></g>
<rect x="288.5" y="148.5" width="37" height="21.5" rx="2.5" fill="#6e9bd0" stroke="#3d5f8a" stroke-width="1.6"/>
<rect x="312" y="166" width="17.7" height="17.5" rx="3.5" fill="#cfa500"/>
<g stroke="#fff" stroke-width="2.8" stroke-linecap="round"><line x1="320.85" y1="168.732" x2="320.85" y2="180.768"/><line x1="315.61434" y1="171.741" x2="326.08566" y2="177.759"/><line x1="315.61434" y1="177.759" x2="326.08566" y2="171.741"/></g>
<rect x="353" y="139" width="42.5" height="42.5" fill="#6e9bd0" stroke="#2f4a6e" stroke-width="2"/>
<g stroke="#2f4a6e" stroke-width="2" fill="none"><line x1="374" y1="139" x2="374" y2="181"/><line x1="353" y1="163" x2="395" y2="163"/><line x1="353" y1="172" x2="374" y2="172"/><line x1="364" y1="163" x2="364" y2="181"/><line x1="354" y1="140" x2="373" y2="162"/><line x1="373" y1="140" x2="354" y2="162"/><line x1="394" y1="140" x2="375" y2="162"/></g>
<rect x="379.5" y="166" width="18.5" height="17.5" rx="3.5" fill="#cfa500"/>
<g stroke="#fff" stroke-width="2.8" stroke-linecap="round"><line x1="388.75" y1="168.46" x2="388.75" y2="181.04"/><line x1="383.2777" y1="171.605" x2="394.2223" y2="177.895"/><line x1="383.2777" y1="177.895" x2="394.2223" y2="171.605"/></g>
<rect x="420.5" y="139" width="43" height="42" rx="3" fill="url(#lbox)" stroke="#2f4a6e" stroke-width="1.6"/>
<path d="M421,141 L434.5,171 L449,141 L461,141" fill="none" stroke="#2f4058" stroke-width="2.6"/>
<circle cx="421" cy="141" r="3.4" fill="#eee" stroke="#2f4058" stroke-width="1.6"/>
<circle cx="434.5" cy="171" r="3.4" fill="#eee" stroke="#2f4058" stroke-width="1.6"/>
<circle cx="449" cy="141" r="3.4" fill="#eee" stroke="#2f4058" stroke-width="1.6"/>
<circle cx="461" cy="141" r="3.4" fill="#eee" stroke="#2f4058" stroke-width="1.6"/>
<rect x="448" y="166" width="18" height="17.5" rx="3.5" fill="#cfa500"/>
<g stroke="#fff" stroke-width="2.8" stroke-linecap="round"><line x1="457.0" y1="168.63" x2="457.0" y2="180.87"/><line x1="451.6756" y1="171.69" x2="462.3244" y2="177.81"/><line x1="451.6756" y1="177.81" x2="462.3244" y2="171.69"/></g>
<rect x="489.5" y="151" width="2.5" height="18" rx="1.2" fill="#a7a7a7"/>
<g transform="translate(508,182) rotate(-63.43)" opacity="1.0"><path d="M0,0 L9.8,-4.25 H44.3 V4.25 H9.8 Z" fill="#7a7573" stroke="#6a6664" stroke-width="1.2"/><path d="M0,0 L9.8,-4.25 V4.25 Z" fill="#8e8e8e" stroke="#6a6664" stroke-width="1"/><rect x="44.3" y="-4.25" width="4.9" height="8.5" fill="#8e8e8e"/></g>
<g transform="translate(517,182) rotate(-54.46)" opacity="1.0"><path d="M0,0 L10.3,-4.25 H46.5 V4.25 H10.3 Z" fill="#7a7573" stroke="#6a6664" stroke-width="1.2"/><path d="M0,0 L10.3,-4.25 V4.25 Z" fill="#8e8e8e" stroke="#6a6664" stroke-width="1"/><rect x="46.5" y="-4.25" width="5.2" height="8.5" fill="#8e8e8e"/></g>
<path d="M547.0,174.5 H555.0 L551,181.5 Z" fill="#9c9c9c"/>
<g transform="translate(578,183) rotate(-55.73)" opacity="1.0"><path d="M0,0 L11.0,-4.75 H49.6 V4.75 H11.0 Z" fill="#e8cf1e" stroke="#7a6a00" stroke-width="1.2"/><path d="M0,0 L11.0,-4.75 V4.75 Z" fill="#f0f0f0" stroke="#7a6a00" stroke-width="1"/><rect x="49.6" y="-4.75" width="5.5" height="9.5" fill="#efefef"/></g>
<rect x="642" y="139" width="36.5" height="38" rx="4" fill="#858585" stroke="#7a7a7a" stroke-width="1"/>
<rect x="647" y="141" width="27" height="15" fill="#8e8e8e" stroke="#7a7a7a"/>
<g stroke="#7a7a7a" stroke-width="1.5"><line x1="650" y1="145" x2="671" y2="145"/><line x1="650" y1="149" x2="671" y2="149"/><line x1="650" y1="153" x2="671" y2="153"/></g>
<rect x="648" y="163" width="24" height="13" fill="#8e8e8e" stroke="#7a7a7a"/>
<g transform="translate(665,182) rotate(-58.17)" opacity="1.0"><path d="M0,0 L6.8,-3.0 H30.7 V3.0 H6.8 Z" fill="#7a7573" stroke="#6a6664" stroke-width="1.2"/><path d="M0,0 L6.8,-3.0 V3.0 Z" fill="#8e8e8e" stroke="#6a6664" stroke-width="1"/><rect x="30.7" y="-3.0" width="3.4" height="6" fill="#8e8e8e"/></g>
<line x1="715" y1="175" x2="746" y2="144" stroke="#8a8a8a" stroke-width="2.2" stroke-dasharray="4,3"/>
<rect x="711" y="171" width="7" height="7" fill="#8a8a8a"/><rect x="743" y="140" width="7" height="7" fill="#8a8a8a"/>
<path d="M768.7,157.5 H776.7 L772.7,164.5 Z" fill="#9c9c9c"/>
<path d="M804,141 L816,167 L828,145 L838,145" fill="none" stroke="#848484" stroke-width="2.5"/>
<g fill="#8a8a8a"><rect x="800.5" y="138.5" width="7" height="7"/><rect x="812.5" y="163.5" width="7" height="7"/><rect x="825" y="141.5" width="7" height="7"/><rect x="836" y="141.5" width="7" height="7"/></g>
<rect x="825" y="163" width="20" height="20" rx="3" fill="#7c7768"/>
<circle cx="835" cy="173" r="5" fill="none" stroke="#8e8b80" stroke-width="2.5"/>
<rect x="876" y="144.5" width="8" height="8" fill="#8a8a8a" stroke="#666"/>
<line x1="884" y1="148" x2="908" y2="148" stroke="#808080" stroke-width="1.2"/><line x1="880" y1="152" x2="873" y2="180" stroke="#666" stroke-width="1.2"/>
<path d="M887,164 L906,180 M899,157 L888,177" stroke="#7a7466" stroke-width="4"/>
<path d="M928.4,157.5 H936.4 L932.4,164.5 Z" fill="#9c9c9c"/>
<g fill="#7e7a6c"><rect x="963" y="141.5" width="38" height="8"/><rect x="963" y="155" width="38" height="8"/><rect x="963" y="169" width="38" height="8"/></g>
<g transform="translate(974,181) rotate(-56.93)" opacity="1.0"><path d="M0,0 L10.3,-3.5 H46.2 V3.5 H10.3 Z" fill="#7a7573" stroke="#6a6664" stroke-width="1.2"/><path d="M0,0 L10.3,-3.5 V3.5 Z" fill="#8e8e8e" stroke="#6a6664" stroke-width="1"/><rect x="46.2" y="-3.5" width="5.1" height="7" fill="#8e8e8e"/></g>
<rect x="1032" y="141" width="20" height="18" fill="#7a7466" opacity="0.6"/>
<rect x="1035" y="143.5" width="31" height="4" fill="#786464"/><rect x="1044" y="140.5" width="12" height="4" fill="none" stroke="#786464" stroke-width="1.5"/>
<path d="M1037,149 H1064 L1062,181.5 H1039 Z" fill="#786464"/><g stroke="#7e7c7a" stroke-width="2.5"><line x1="1045" y1="154" x2="1045" y2="177"/><line x1="1051" y1="154" x2="1051" y2="177"/><line x1="1057" y1="154" x2="1057" y2="177"/></g>
<path d="M1098,158 L1130,151 M1098,160 L1130,170" stroke="#a0a0a0" stroke-width="2.5"/>
<ellipse cx="1134" cy="149.5" rx="5.5" ry="3.5" fill="none" stroke="#7a5c5c" stroke-width="1.8" transform="rotate(-30 1134 149.5)"/><ellipse cx="1134" cy="171" rx="5.5" ry="3.5" fill="none" stroke="#7a5c5c" stroke-width="1.8" transform="rotate(30 1134 171)"/>
<path d="M1180,141 H1195 L1201.5,147.5 V171 H1180 Z" fill="#8c8c8c" stroke="#7a7a7a"/>
<path d="M1171,149.5 H1186 L1192,155.5 V178.5 H1171 Z" fill="#9a9a9a" stroke="#7a7a7a"/>
<g stroke="#7a7a7a" stroke-width="1.5"><line x1="1174" y1="161" x2="1188" y2="161"/><line x1="1174" y1="165" x2="1188" y2="165"/><line x1="1174" y1="169" x2="1188" y2="169"/><line x1="1174" y1="173" x2="1188" y2="173"/></g>
<rect x="1240" y="143" width="28" height="35" fill="none" stroke="#8e8e8e" stroke-width="2"/>
<rect x="1247" y="140" width="14" height="6" fill="#8e8e8e"/>
<path d="M1244,150 H1258 L1264,156 V176 H1244 Z" fill="#9a9a9a" stroke="#7a7a7a"/>
<g stroke="#7a7a7a" stroke-width="1.5"><line x1="1247" y1="160" x2="1261" y2="160"/><line x1="1247" y1="164" x2="1261" y2="164"/><line x1="1247" y1="168" x2="1261" y2="168"/><line x1="1247" y1="172" x2="1261" y2="172"/></g>
<path d="M1318,155.5 L1320.8,159.25 L1318,163 M1322.5,155.5 L1325.3,159.25 L1322.5,163" fill="none" stroke="#333" stroke-width="1.15" stroke-linecap="round" stroke-linejoin="round"/>
<rect x="1345.6" y="151" width="2.5" height="19" rx="1.2" fill="#a7a7a7"/>
<rect x="1361" y="138.5" width="42" height="38.5" fill="#e6e6e6" stroke="#222" stroke-width="1.8" stroke-dasharray="3,2"/>
<rect x="1362" y="140.5" width="27.5" height="26.5" fill="#fde74c" stroke="#c9a400" stroke-width="2"/>
<path d="M1378,153 L1378,178 L1384,172.5 L1389,182.5 L1394,180.5 L1389,170.5 L1397.5,170.5 Z" fill="#fff" stroke="#111" stroke-width="1.6" stroke-linejoin="round" transform="translate(1378,153) scale(1.1) translate(-1378,-153)"/>
<path d="M1420.4,157.5 H1428.4 L1424.4,164.5 Z" fill="#a9a9a9"/>
<rect x="1466.5" y="152.5" width="27" height="27" fill="#fde74c" stroke="#c9a400" stroke-width="2"/>
<path d="M1476.5,144.5 C1474,139 1460,138.5 1459.5,146 C1459,151 1463,153 1468,153 C1461,153 1456,156 1456,161.5 C1456,169 1471,169.5 1477.5,163" fill="none" stroke="#6a3d7e" stroke-width="3.3" stroke-linecap="round"/>
<path d="M1513.0,157.5 H1521.0 L1517,164.5 Z" fill="#a9a9a9"/>
<rect x="1546.5" y="140.5" width="27" height="27" fill="#fde74c" stroke="#c9a400" stroke-width="2"/>
<rect x="1554.5" y="148.5" width="27" height="27" fill="#fde74c" stroke="#c9a400" stroke-width="2"/>
<rect x="1568" y="162" width="22" height="22" rx="3" fill="#d41414"/>
<circle cx="1579" cy="173" r="7.5" fill="#e88a8a" stroke="#efefef" stroke-width="2.5"/><line x1="1574" y1="178" x2="1584" y2="168" stroke="#efefef" stroke-width="2.5"/>
<path d="M1605.0,157.5 H1613.0 L1609,164.5 Z" fill="#a9a9a9"/>
<rect x="1638.5" y="140.5" width="27" height="27" fill="#fde74c" stroke="#c9a400" stroke-width="2"/>
<path d="M1673,181 L1667,169 A6.5,6.5 0 1 1 1679,169 Z" fill="#7aa0c0" stroke="#5a7e9e" stroke-width="1"/><circle cx="1673" cy="166.5" r="2.8" fill="#727272"/>
<path d="M1697.0,157.5 H1705.0 L1701,164.5 Z" fill="#a9a9a9"/>
<g stroke="#2c2c2c" stroke-width="2.5" stroke-linecap="round"><line x1="297" y1="211" x2="307" y2="221"/><line x1="307" y1="211" x2="297" y2="221"/></g>
<rect x="292.5" y="206.5" width="19" height="19" rx="4" fill="none" stroke="#2c2c2c" stroke-width="2"/>
<g stroke="#2c2c2c" stroke-width="2.5" stroke-linecap="round"><line x1="297" y1="662" x2="307" y2="672"/><line x1="307" y1="662" x2="297" y2="672"/></g>
<rect x="292.5" y="657.5" width="19" height="19.5" rx="4" fill="none" stroke="#2c2c2c" stroke-width="2"/>
<rect x="6.5" y="252.5" width="23" height="23" fill="#efefef" stroke="#838383" stroke-width="1.5"/>
<rect x="22" y="270" width="12" height="11.5" rx="2" fill="#5e9b5e"/><g stroke="#fff" stroke-width="2.2"><line x1="24.5" y1="275.7" x2="31.5" y2="275.7"/><line x1="28" y1="272.5" x2="28" y2="279"/></g>
<g transform="translate(58,251.5) scale(0.7)"><path d="M2,16 C4,4 22,-2 32,8 L36,3 L38,20 L22,18 L27,13 C20,7 10,9 7,17 Z" fill="url(#blueg)" stroke="#3d6aa8" stroke-width="1.3"/><path d="M38,24 C36,36 18,42 8,32 L4,37 L2,20 L18,22 L13,27 C20,33 30,31 33,23 Z" fill="url(#blueg)" stroke="#3d6aa8" stroke-width="1.3"/></g>
<path d="M111.5,252 H137 V257 L127,270 V281 L121,277 V270 L111.5,257 Z" fill="#6e9bd0" stroke="#2f4a6e" stroke-width="1.3" stroke-linejoin="round"/>
<rect x="112" y="252.5" width="24.5" height="4.5" fill="#fde74c"/>
<g stroke="#b0b0b0" stroke-width="1.8" fill="none"><path d="M162,254.5 H190"/><path d="M164.5,254.5 V277"/><path d="M164.5,263 H170"/><path d="M164.5,275 H170"/></g>
<rect x="170.5" y="260" width="5.5" height="5.5" fill="#f59a1a"/><rect x="170.5" y="272" width="5.5" height="5.5" fill="#f59a1a"/>
<path d="M182,251 L191.5,261.5 H186 V277.5 H178 V261.5 H172.5 Z" fill="#6e9bd0" stroke="#2f4a6e" stroke-width="1.3"/>
<circle cx="228.2" cy="265.9" r="12.5" fill="url(#blueg)" stroke="#2f4a6e" stroke-width="1.4"/>
<text x="223" y="275" font-family="Liberation Serif" font-style="italic" font-weight="bold" font-size="19" fill="#fff">i</text>
<path d="M7.5,317.5 H17 L12.2,326.5 Z" fill="#707070"/>
<path d="M37,314 H47 L51,317 H64 V335.5 H37 Z" fill="#efefef" stroke="#84847c" stroke-width="1.6" stroke-linejoin="round"/>
<path d="M43.5,324 L50,317.5 L56.5,324 M45.5,322.5 V330.5 H54.5 V322.5" fill="none" stroke="#111" stroke-width="2"/>
<path d="M39.2,352.5 L48.8,357 L39.2,361.5 Z" fill="#6e6e6e"/>
<path d="M68.5,349.5 H78.5 L82.5,352.5 H95.5 V371.0 H68.5 Z" fill="#efefef" stroke="#84847c" stroke-width="1.6" stroke-linejoin="round"/>
<path d="M39.2,388.5 L48.8,393 L39.2,397.5 Z" fill="#6e6e6e"/>
<path d="M68.5,385.5 H78.5 L82.5,388.5 H95.5 V407.0 H68.5 Z" fill="#efefef" stroke="#84847c" stroke-width="1.6" stroke-linejoin="round"/>
<path d="M39.2,424.5 L48.8,429 L39.2,433.5 Z" fill="#6e6e6e"/>
<path d="M68.5,421.5 H78.5 L82.5,424.5 H95.5 V443.0 H68.5 Z" fill="#efefef" stroke="#84847c" stroke-width="1.6" stroke-linejoin="round"/>
<path d="M39.2,460.5 L48.8,465 L39.2,469.5 Z" fill="#6e6e6e"/>
<path d="M68.5,457.5 H78.5 L82.5,460.5 H95.5 V479.0 H68.5 Z" fill="#efefef" stroke="#84847c" stroke-width="1.6" stroke-linejoin="round"/>
<path d="M39.2,496.5 L48.8,501 L39.2,505.5 Z" fill="#6e6e6e"/>
<path d="M68.5,493.5 H78.5 L82.5,496.5 H95.5 V515.0 H68.5 Z" fill="#efefef" stroke="#84847c" stroke-width="1.6" stroke-linejoin="round"/>
<path d="M69,490 H79 L82,493 H96 V495.5 H69 Z" fill="#a8a8a8"/>
<path d="M39.2,532.5 L48.8,537 L39.2,541.5 Z" fill="#6e6e6e"/>
<path d="M68.5,529.5 H78.5 L82.5,532.5 H95.5 V551.0 H68.5 Z" fill="#efefef" stroke="#84847c" stroke-width="1.6" stroke-linejoin="round"/>
<path d="M76,543 H88 M84,539 L88,543 L84,547" fill="none" stroke="#111" stroke-width="1.8"/>
<path d="M39.2,568.5 L48.8,573 L39.2,577.5 Z" fill="#6e6e6e"/>
<path d="M68.5,565.5 H78.5 L82.5,568.5 H95.5 V587.0 H68.5 Z" fill="#efefef" stroke="#84847c" stroke-width="1.6" stroke-linejoin="round"/>
<path d="M39.2,604.5 L48.8,609 L39.2,613.5 Z" fill="#6e6e6e"/>
<g clip-path="url(#treeclip)">
<path d="M68.5,601.5 H78.5 L82.5,604.5 H95.5 V623.0 H68.5 Z" fill="#efefef" stroke="#84847c" stroke-width="1.6" stroke-linejoin="round"/>
</g>
<g transform="translate(-0.5,697.5) scale(0.72)"><path d="M17,10.6 L38.3,19 L35.9,27 L13.9,17.9 Z" fill="#f7e85a"/><path d="M13.9,17.9 L35.9,27 L33.4,35 L10.8,25.2 Z" fill="#82aee0"/><path d="M10.8,25.2 L33.4,35 L31,43 L7.7,32.5 Z" fill="#ec3a30"/><line x1="37" y1="25" x2="49.6" y2="11.2" stroke="#8a5a10" stroke-width="5" stroke-linecap="round"/><line x1="37" y1="25" x2="49.6" y2="11.2" stroke="#e0a850" stroke-width="3" stroke-linecap="round"/><path d="M25,24.5 L29.5,20 L43.5,31.5 L39,36 Z" fill="#dca04c" stroke="#8a5a10" stroke-width="1"/><path d="M19.3,31.5 L27.5,23.5 L40.5,35 L32,43.7 Z" fill="#ecc88c" stroke="#8a5a10" stroke-width="1"/><g stroke="#b88440" stroke-width="0.9"><line x1="22" y1="29" x2="34.5" y2="41"/><line x1="24.5" y1="26.5" x2="37" y2="38.5"/><line x1="27" y1="24.5" x2="39" y2="36"/></g></g>
<path d="M59,731 V712 M59,731 H78" stroke="#a0a0a0" stroke-width="1.5" fill="none"/>
<rect x="64" y="708" width="19" height="19" fill="#f0f0f0" stroke="#aaa" stroke-width="1.3"/>
<path d="M70,724 V705 a3,3 0 0 1 6,0 V720" fill="none" stroke="#3d5f8a" stroke-width="1.8"/>
<rect x="74" y="722" width="12" height="12" rx="2" fill="#5e9b5e"/><g stroke="#fff" stroke-width="2.2"><line x1="76.5" y1="728" x2="83.5" y2="728"/><line x1="80" y1="724.5" x2="80" y2="731.5"/></g>
<path d="M110.5,719 C116,709 131,709 137,719 C131,728 116,728 110.5,719 Z" fill="#f4f4f4" stroke="#bbb" stroke-width="1"/>
<circle cx="123.5" cy="718.5" r="6" fill="#6e9bd0" stroke="#2f4a6e"/><circle cx="123.5" cy="717.5" r="2.3" fill="#111"/>
<path d="M111,712 C118,705 132,705 137,712" fill="none" stroke="#a8a8a8" stroke-width="1.2"/>
<path d="M137.5,726.25 H144.5 L141,732.75 Z" fill="#a9a9a9"/>
<path d="M163.5,704.5 H189 V709 L179,721 V733 L173.5,729 V721 L163.5,709 Z" fill="#6e9bd0" stroke="#2f4a6e" stroke-width="1.3" stroke-linejoin="round"/>
<rect x="164" y="705" width="24.5" height="4.5" fill="#fde74c"/>
<path d="M189.0,726.25 H196.0 L192.5,732.75 Z" fill="#a9a9a9"/>
<path d="M229,708.5 C227,704 216,704 216,710 C216,713.5 219,715 223,715 C217.5,715 214,717.5 214,721 C214,727 225,728 230,722.5" fill="none" stroke="#6a3d7e" stroke-width="2.6" stroke-linecap="round"/>
<path d="M229,720 H244 V723 L239,728 V734 H234 V728 L229,723 Z" fill="#e0e0e0" opacity="0.7"/><rect x="228" y="719" width="17" height="16" rx="2" fill="#9a9a9a" opacity="0.6"/>
<path d="M259.5,714.75 H266.5 L263,721.25 Z" fill="#a9a9a9"/>
<path d="M298.5,714 L301.3,717.5 L298.5,721 M303.0,714 L305.8,717.5 L303.0,721" fill="none" stroke="#333" stroke-width="1.15" stroke-linecap="round" stroke-linejoin="round"/>
<path d="M47,776 L53,783.5 L63,769" fill="none" stroke="#333" stroke-width="3.2" stroke-linecap="round" stroke-linejoin="round"/>
<defs><pattern id="speck" width="9" height="9" patternUnits="userSpaceOnUse"><rect x="1" y="2" width="2" height="1.5" fill="#fff"/><rect x="5" y="6" width="1.5" height="2" fill="#fff"/><rect x="6.5" y="1" width="1" height="1" fill="#fff"/></pattern><clipPath id="mapclip"><rect x="490" y="480" width="528" height="527"/></clipPath></defs>
<rect x="490" y="480" width="528" height="527" fill="#e0598a"/>
<rect x="490" y="480" width="528" height="527" fill="url(#speck)" opacity="0.5"/>
<g clip-path="url(#mapclip)">
<path d="M598.4,478.1 L601.9,482.2 L605.9,485.6 L610.5,488.1 L614.5,491.5 L618.4,495.1 L621.7,499.7 L626.5,502.0 L629.5,506.9 L633.6,509.9 L636.6,514.7 L640.9,517.5 L647.0,517.8 L649.4,520.7 L651.5,523.5 L651.7,529.4 L654.6,533.6 L659.6,536.2 L658.6,543.0 L663.3,546.1 L665.5,551.0 L666.5,556.6 L672.8,558.4 L674.1,563.8 L675.9,568.8 L677.2,573.6 L682.4,575.9 L686.3,579.5 L689.3,583.8 L685.8,592.1 L686.8,597.6 L690.2,601.5 L693.2,605.7 L691.7,610.6 L696.3,612.8 L702.4,616.1 L697.0,624.3 L696.2,630.6 L703.0,633.6 L709.0,636.1 L708.7,641.0 L712.1,645.4 L713.0,650.7 L711.6,656.7 L717.5,660.3 L715.3,671.1 L719.2,680.4 L728.6,679.8 L732.1,684.2 L731.1,692.3 L741.9,690.6 L745.6,694.8 L746.8,700.5 L754.0,700.7 L754.2,706.8 L752.7,714.2 L759.1,715.7 L760.8,720.6 L762.1,725.9 L765.3,729.8 L772.0,731.0 L777.2,733.3 L780.3,736.7 L781.7,741.4 L783.5,746.4 L789.0,749.1 L791.1,754.1 L794.5,758.1 L792.8,765.3 L798.5,768.0 L800.5,772.9 L802.4,783.0 L812.4,784.7 L818.6,784.0 L822.2,787.8 L825.1,793.0 L832.7,789.9 L835.6,794.9 L840.2,797.0 L847.1,799.7 L854.2,802.5 L859.4,799.2 L864.5,799.0 L869.3,801.5 L874.4,800.6 L879.2,803.8 L884.2,804.4 L889.2,804.6 L895.7,801.3 L902.1,800.3 L906.6,796.9 L911.8,796.5 L917.5,798.3 L922.3,796.4 L927.2,794.7 L931.4,790.0 L936.3,788.3 L941.1,788.4 L945.7,788.4 L950.6,787.0 L955.4,784.4 L960.6,786.2 L965.5,784.9 L970.4,782.6 L975.4,782.3 L980.4,783.1 L985.2,781.4 L990.2,781.8 L995.1,780.1 L1000.2,781.3 L1005.1,779.4 L1010.2,780.7 L1015.1,779.1 L1020.1,778.3 L1019.9,773.9 L1014.8,773.0 L1009.8,772.9 L1004.8,772.7 L999.8,772.9 L994.9,774.4 L989.8,774.5 L984.8,772.8 L979.7,774.3 L974.5,773.5 L969.5,773.7 L964.5,774.8 L959.4,774.2 L954.4,774.8 L949.4,774.5 L944.4,775.8 L938.7,774.7 L933.7,778.1 L928.6,778.8 L923.4,779.1 L917.6,777.1 L913.1,780.4 L907.7,779.9 L903.1,782.9 L898.4,785.1 L894.1,782.9 L890.8,781.3 L885.8,780.5 L880.9,779.1 L875.6,783.3 L870.8,779.7 L865.8,779.4 L860.6,781.5 L855.7,779.2 L853.7,777.7 L849.4,780.9 L845.6,777.3 L844.4,769.4 L837.4,771.4 L833.7,767.7 L828.9,765.9 L826.4,760.1 L828.5,756.1 L822.1,759.4 L821.2,753.8 L816.9,750.3 L819.9,742.2 L813.2,740.2 L808.8,736.8 L805.3,732.8 L803.5,727.7 L799.8,723.3 L800.8,715.6 L796.0,713.0 L796.1,706.7 L793.0,702.8 L784.4,703.0 L785.7,695.7 L783.3,691.3 L779.3,688.0 L775.2,684.9 L770.8,681.5 L769.3,675.0 L764.3,671.9 L760.6,667.7 L764.1,657.6 L756.9,656.2 L758.4,647.8 L758.6,646.7 L753.9,648.2 L758.0,641.2 L748.5,638.8 L754.0,631.4 L744.0,629.2 L746.9,621.6 L746.2,614.9 L738.5,612.3 L744.1,603.9 L737.6,600.8 L734.2,596.3 L733.3,588.8 L724.2,586.2 L721.9,581.6 L716.1,579.1 L714.7,573.9 L711.9,569.6 L707.1,566.5 L705.3,561.5 L697.7,559.8 L695.5,554.7 L695.9,548.1 L691.2,545.2 L688.9,540.5 L683.6,538.0 L682.3,532.8 L678.3,529.6 L673.8,526.6 L669.9,523.1 L668.3,518.1 L666.1,513.6 L662.5,507.4 L654.4,506.6 L650.4,503.4 L645.3,501.8 L641.6,497.9 L638.4,493.5 L632.3,493.4 L629.2,489.2 L623.3,488.5 L619.6,484.8 L615.2,481.9 L610.6,479.4 L605.7,477.1 L601.4,474.1 Z" fill="#fff"/>
<path d="M889.7,476.5 L891.3,481.9 L892.3,487.4 L892.4,493.0 L894.3,498.4 L895.1,503.9 L895.9,509.4 L897.0,514.8 L897.3,520.3 L897.3,525.3 L898.2,530.3 L898.5,535.3 L899.0,540.3 L899.6,545.3 L901.1,550.2 L901.2,555.2 L900.5,560.3 L901.9,565.3 L901.9,570.4 L903.5,575.3 L903.9,580.4 L903.4,585.5 L904.5,590.5 L904.4,595.6 L905.7,600.5 L906.6,605.5 L907.3,610.5 L907.9,615.5 L908.1,620.6 L908.2,625.7 L909.9,630.6 L909.9,635.7 L912.5,640.4 L913.4,645.4 L914.2,650.4 L913.0,655.7 L915.5,660.5 L914.9,665.7 L915.0,670.9 L917.8,675.6 L918.3,680.7 L917.5,686.1 L920.9,690.6 L920.8,695.8 L922.7,700.7 L922.1,706.0 L923.5,710.9 L926.1,715.6 L925.2,720.8 L927.7,725.5 L926.2,730.8 L929.0,735.5 L930.0,740.5 L930.0,745.6 L930.3,750.6 L929.8,755.8 L932.6,760.2 L931.2,764.8 L932.6,769.9 L930.7,774.8 L932.4,779.9 L930.7,784.9 L932.2,789.9 L940.0,790.2 L940.1,785.2 L940.8,780.2 L939.5,775.1 L938.7,770.1 L940.9,765.2 L941.8,759.7 L938.9,754.4 L940.2,749.1 L937.0,744.5 L938.3,739.2 L936.0,734.4 L937.4,729.1 L936.7,724.1 L934.5,719.2 L932.8,714.2 L932.1,709.2 L929.8,704.4 L929.7,699.3 L928.7,694.3 L927.9,689.2 L928.0,684.0 L926.0,679.2 L926.2,674.0 L925.2,669.1 L922.1,664.5 L922.8,659.3 L922.5,654.2 L921.0,649.3 L919.0,644.5 L918.7,639.4 L917.1,634.6 L918.3,629.3 L915.7,624.5 L916.4,619.3 L915.8,614.4 L914.0,609.5 L913.7,604.5 L912.5,599.5 L911.6,594.6 L911.5,589.5 L910.2,584.6 L909.0,579.6 L908.8,574.6 L908.6,569.6 L907.5,564.7 L907.1,559.7 L906.4,554.7 L906.6,549.6 L904.8,544.8 L904.0,539.8 L904.6,534.7 L904.9,529.6 L904.3,524.6 L902.9,519.6 L902.9,513.9 L900.9,508.6 L900.3,503.0 L898.8,497.6 L897.7,492.2 L898.0,486.5 L897.2,481.0 L895.7,475.6 Z" fill="#fff"/>
<path d="M818.6,801.8 L812.9,802.4 L807.7,803.9 L803.0,806.9 L797.4,807.7 L793.1,811.4 L788.3,813.5 L783.1,814.0 L777.5,813.9 L772.9,816.8 L768.2,819.3 L763.4,821.5 L757.8,821.4 L753.5,825.2 L747.5,823.9 L742.7,826.0 L738.1,829.0 L733.2,831.1 L728.5,831.4 L724.2,832.9 L718.9,831.4 L714.1,833.1 L709.3,835.2 L704.2,835.4 L699.0,834.6 L694.2,836.6 L688.6,832.9 L684.1,837.3 L679.1,838.2 L674.3,839.8 L670.2,840.2 L666.7,836.3 L661.0,838.9 L656.0,837.9 L650.7,838.4 L646.0,835.9 L641.1,836.2 L636.2,835.1 L631.2,833.0 L626.1,831.2 L621.3,828.6 L617.5,826.6 L615.7,823.2 L612.5,819.4 L608.7,816.0 L606.9,811.1 L603.0,807.3 L597.6,804.4 L595.0,799.0 L590.6,795.4 L585.6,792.4 L582.0,787.8 L577.6,783.4 L572.5,779.9 L567.8,775.9 L564.2,780.2 L568.5,784.6 L573.1,788.6 L577.5,792.7 L581.8,796.2 L585.2,800.8 L589.5,804.5 L593.0,809.0 L597.1,812.5 L600.8,815.6 L603.4,819.9 L605.2,824.9 L608.5,828.6 L612.6,833.3 L618.7,835.2 L623.9,836.7 L628.4,840.0 L633.5,841.7 L638.6,844.8 L644.0,846.2 L649.0,847.1 L653.9,848.3 L658.4,852.2 L663.6,851.8 L669.7,855.3 L675.9,852.3 L681.0,852.1 L685.9,850.5 L691.2,852.6 L696.4,853.3 L700.9,848.8 L706.3,851.2 L710.8,846.5 L715.9,846.6 L721.0,846.9 L726.1,846.6 L731.8,845.8 L736.9,842.1 L742.3,841.7 L746.8,838.4 L751.4,835.5 L756.9,835.3 L762.0,833.9 L766.3,830.2 L771.3,828.6 L776.6,827.8 L781.8,826.7 L786.9,825.3 L792.0,823.2 L797.0,820.5 L802.1,818.4 L806.8,815.6 L812.9,816.1 L816.9,811.5 L822.5,810.8 Z" fill="#fff"/>
<path d="M489.9,823.6 L495.0,823.6 L500.0,823.8 L504.9,824.9 L509.9,825.2 L514.9,825.2 L519.8,826.1 L524.8,826.0 L529.7,826.8 L534.7,827.5 L539.8,826.6 L544.7,828.4 L549.6,828.9 L554.5,829.4 L559.6,830.2 L564.5,831.7 L569.5,832.4 L574.7,832.5 L579.6,834.4 L584.7,834.8 L589.8,834.6 L594.7,836.3 L599.7,836.9 L604.7,837.3 L609.7,837.9 L610.2,834.6 L605.3,833.4 L600.2,833.0 L595.3,831.7 L590.2,831.7 L585.2,831.5 L580.3,830.3 L575.3,829.4 L570.3,828.6 L565.5,826.6 L560.5,825.4 L555.4,824.9 L550.5,822.6 L545.2,823.6 L540.2,823.0 L535.2,822.5 L530.2,822.4 L525.3,820.9 L520.2,820.0 L515.0,821.4 L510.1,820.0 L505.1,820.0 L500.1,819.6 L495.1,820.3 L490.0,820.8 Z" fill="#fff"/>
<path d="M931.8,804.1 L934.1,809.2 L941.3,811.8 L940.2,818.7 L944.6,822.7 L948.3,827.1 L950.8,831.9 L952.9,836.6 L950.9,843.2 L953.3,848.1 L954.7,853.3 L959.9,857.0 L960.9,862.4 L965.5,866.4 L965.8,872.1 L969.4,876.4 L971.0,881.6 L980.9,877.6 L977.4,873.2 L975.5,868.2 L974.7,862.7 L970.8,858.5 L973.6,851.6 L970.3,847.1 L967.2,842.5 L963.2,838.3 L962.9,832.7 L960.8,827.4 L960.0,821.3 L954.6,817.7 L955.5,811.0 L950.8,807.1 L950.7,800.9 L944.8,797.6 Z" fill="#fff"/>
<path d="M669.4,753.0 L673.7,757.2 L678.6,760.3 L683.6,763.3 L689.1,765.5 L693.6,769.4 L699.1,771.5 L703.3,774.3 L707.8,776.9 L711.8,780.1 L716.1,782.9 L720.1,786.3 L724.5,789.0 L728.4,792.8 L733.8,795.0 L738.5,798.0 L743.7,800.1 L748.7,802.7 L751.1,797.9 L745.7,796.1 L741.2,792.7 L736.5,789.5 L731.6,787.3 L727.6,784.4 L722.4,782.8 L718.2,779.9 L714.5,776.1 L710.1,773.5 L705.0,771.8 L701.0,768.4 L696.1,765.2 L690.9,762.4 L685.9,759.6 L681.2,756.0 L675.7,753.8 L671.2,749.9 Z" fill="#fff"/>
<path d="M519.1,913.5 L524.4,913.8 L528.9,916.7 L534.2,917.0 L539.3,917.8 L543.8,921.1 L549.0,921.6 L554.0,922.7 L559.3,922.8 L564.3,924.2 L569.0,926.4 L573.7,928.9 L579.1,928.7 L584.3,929.2 L589.2,930.9 L594.2,931.8 L598.7,934.0 L603.3,936.2 L608.8,937.1 L613.9,938.8 L619.2,939.9 L623.5,943.8 L625.8,938.0 L621.0,935.6 L616.1,933.3 L611.4,930.6 L606.3,928.7 L601.6,925.0 L595.8,925.6 L590.7,924.9 L585.7,923.6 L580.7,922.2 L576.4,918.3 L570.8,919.5 L566.3,916.1 L560.7,917.2 L555.9,915.3 L550.8,914.4 L545.7,913.4 L541.0,911.0 L535.7,910.9 L530.6,910.3 L525.5,909.3 L520.8,906.8 Z" fill="#fff"/>
<ellipse cx="563" cy="558" rx="8" ry="6" fill="#fff"/>
<ellipse cx="590" cy="566" rx="8" ry="6" fill="#fff"/>
<ellipse cx="623" cy="559" rx="12" ry="9" fill="#fff"/>
<ellipse cx="520" cy="565" rx="4" ry="3" fill="#fff"/>
<ellipse cx="505" cy="572" rx="5" ry="4" fill="#fff"/>
<ellipse cx="540" cy="556" rx="3" ry="3" fill="#fff"/>
<ellipse cx="650" cy="560" rx="6" ry="5" fill="#fff"/>
<ellipse cx="497" cy="548" rx="4" ry="6" fill="#fff"/>
<path d="M903.4,906.8 L907.5,911.8 L913.4,909.1 L917.9,912.3 L921.3,920.4 L926.2,922.0 L933.5,913.3 L936.2,924.1 L942.1,921.7 L947.7,920.5 L950.8,926.0 L956.1,927.0 L964.8,920.4 L970.0,923.8 L974.4,911.3 L968.0,911.3 L963.0,907.4 L959.3,897.7 L953.7,895.3 L946.3,904.1 L942.6,897.4 L938.3,893.3 L931.5,899.9 L928.5,890.4 L922.2,894.4 L916.6,895.8 L911.3,895.6 L906.8,892.3 Z" fill="#fff"/>
<path d="M911.7,950.4 L914.8,957.0 L917.7,964.3 L924.1,969.9 L926.7,976.5 L936.4,972.0 L934.0,965.3 L930.9,959.4 L929.9,952.7 L927.0,946.0 Z" fill="#fff"/>
<path d="M904.8,1000.6 L909.9,999.1 L914.8,1002.4 L919.9,1000.2 L924.8,1003.5 L929.8,1003.3 L935.1,1005.8 L940.4,1002.9 L945.7,1007.5 L950.7,1006.4 L955.4,1001.0 L960.7,1005.8 L965.5,1000.6 L970.7,1001.2 L975.7,999.9 L980.8,1000.7 L985.5,997.2 L990.5,997.1 L995.7,998.3 L1000.8,998.1 L1005.6,995.8 L1010.8,997.3 L1009.6,986.0 L1004.6,986.9 L999.3,984.4 L994.6,987.7 L989.4,986.8 L984.6,989.5 L979.0,984.4 L974.5,989.0 L969.1,986.5 L964.7,991.4 L959.4,986.7 L954.6,990.2 L949.5,988.7 L944.4,987.6 L939.5,989.2 L934.9,992.9 L930.2,991.5 L925.2,989.5 L920.1,993.1 L915.2,989.9 L910.1,992.7 L905.1,992.8 Z" fill="#fff"/>
<path d="M492.7,714.5 L498.1,714.1 L503.4,714.8 L508.6,715.7 L514.0,715.8 L519.2,717.1 L524.6,716.9 L529.6,717.5 L534.4,719.6 L539.5,721.8 L543.9,725.4 L549.0,727.5 L553.9,730.1 L559.4,731.4 L561.1,727.6 L555.7,726.1 L551.2,722.8 L546.1,720.6 L540.8,719.0 L535.5,717.2 L530.7,713.3 L524.9,713.6 L519.7,712.2 L514.3,712.4 L509.0,712.2 L503.9,710.4 L498.5,710.2 L493.2,710.4 Z" fill="#fff"/>
<ellipse cx="841.4" cy="807.5" rx="4.4" ry="4.9" fill="#fff"/>
<ellipse cx="745.5" cy="640.4" rx="2.7" ry="4.8" fill="#fff"/>
<ellipse cx="631.8" cy="482.1" rx="4.2" ry="2.6" fill="#fff"/>
<ellipse cx="966.7" cy="792.7" rx="2.8" ry="4.7" fill="#fff"/>
<ellipse cx="664.7" cy="510.8" rx="3.7" ry="2.4" fill="#fff"/>
<ellipse cx="881.0" cy="788.8" rx="1.7" ry="4.7" fill="#fff"/>
<ellipse cx="719.5" cy="587.1" rx="2.8" ry="2.7" fill="#fff"/>
<ellipse cx="761.8" cy="666.0" rx="4.7" ry="2.5" fill="#fff"/>
<ellipse cx="897.5" cy="774.6" rx="4.8" ry="1.6" fill="#fff"/>
<ellipse cx="654.4" cy="500.7" rx="4.2" ry="4.3" fill="#fff"/>
<ellipse cx="767.7" cy="694.5" rx="1.5" ry="4.8" fill="#fff"/>
<ellipse cx="722.3" cy="594.1" rx="2.6" ry="2.6" fill="#fff"/>
<ellipse cx="699.7" cy="603.8" rx="2.9" ry="2.1" fill="#fff"/>
<ellipse cx="749.6" cy="638.7" rx="2.6" ry="4.9" fill="#fff"/>
<ellipse cx="653.6" cy="522.1" rx="1.8" ry="3.2" fill="#fff"/>
<ellipse cx="897.2" cy="800.9" rx="3.1" ry="4.6" fill="#fff"/>
<ellipse cx="696.4" cy="530.6" rx="1.9" ry="4.4" fill="#fff"/>
<ellipse cx="698.3" cy="596.9" rx="2.4" ry="3.0" fill="#fff"/>
<ellipse cx="684.9" cy="558.0" rx="3.5" ry="2.6" fill="#fff"/>
<ellipse cx="734.4" cy="667.1" rx="3.8" ry="1.9" fill="#fff"/>
<ellipse cx="776.0" cy="701.7" rx="4.4" ry="4.4" fill="#fff"/>
<ellipse cx="689.0" cy="576.4" rx="2.2" ry="4.9" fill="#fff"/>
<ellipse cx="789.9" cy="715.3" rx="2.1" ry="3.6" fill="#fff"/>
<ellipse cx="997.1" cy="778.5" rx="3.6" ry="3.7" fill="#fff"/>
<ellipse cx="653.4" cy="521.4" rx="5.0" ry="1.6" fill="#fff"/>
<ellipse cx="867.9" cy="787.6" rx="2.6" ry="3.9" fill="#fff"/>
<ellipse cx="680.8" cy="548.2" rx="3.2" ry="3.2" fill="#fff"/>
<ellipse cx="710.5" cy="650.0" rx="3.7" ry="1.8" fill="#fff"/>
<ellipse cx="661.8" cy="588.1" rx="3.8" ry="3.0" fill="#fff"/>
<ellipse cx="601.7" cy="484.1" rx="3.0" ry="4.5" fill="#fff"/>
<ellipse cx="948.5" cy="815.0" rx="2.2" ry="1.5" fill="#fff"/>
<ellipse cx="677.7" cy="519.6" rx="4.6" ry="3.1" fill="#fff"/>
<ellipse cx="669.0" cy="524.7" rx="4.3" ry="2.9" fill="#fff"/>
<ellipse cx="779.5" cy="755.2" rx="2.0" ry="2.5" fill="#fff"/>
<ellipse cx="785.6" cy="711.0" rx="4.1" ry="4.3" fill="#fff"/>
<ellipse cx="949.0" cy="820.8" rx="4.9" ry="3.2" fill="#fff"/>
<ellipse cx="628.4" cy="495.5" rx="4.0" ry="3.9" fill="#fff"/>
<ellipse cx="693.0" cy="527.4" rx="3.7" ry="2.2" fill="#fff"/>
<ellipse cx="735.0" cy="658.8" rx="3.3" ry="2.8" fill="#fff"/>
<ellipse cx="640.8" cy="479.2" rx="2.2" ry="4.6" fill="#fff"/>
<ellipse cx="1020.0" cy="789.8" rx="1.9" ry="3.6" fill="#fff"/>
<ellipse cx="811.3" cy="732.3" rx="2.6" ry="2.4" fill="#fff"/>
<ellipse cx="729.8" cy="675.9" rx="1.6" ry="3.7" fill="#fff"/>
<ellipse cx="717.7" cy="666.1" rx="4.4" ry="4.4" fill="#fff"/>
<ellipse cx="959.6" cy="791.8" rx="3.0" ry="1.8" fill="#fff"/>
<ellipse cx="739.8" cy="655.9" rx="2.0" ry="4.7" fill="#fff"/>
<ellipse cx="711.2" cy="615.1" rx="3.3" ry="2.8" fill="#fff"/>
<ellipse cx="948.9" cy="744.0" rx="4.1" ry="4.4" fill="#fff"/>
<ellipse cx="670.8" cy="511.8" rx="4.3" ry="4.3" fill="#fff"/>
<ellipse cx="884.1" cy="785.3" rx="2.7" ry="4.1" fill="#fff"/>
<ellipse cx="636.8" cy="505.6" rx="3.1" ry="2.4" fill="#fff"/>
<ellipse cx="730.6" cy="663.8" rx="2.6" ry="1.6" fill="#fff"/>
<ellipse cx="659.6" cy="524.2" rx="2.6" ry="2.8" fill="#fff"/>
<ellipse cx="1006.6" cy="795.9" rx="3.7" ry="2.8" fill="#fff"/>
<ellipse cx="922.6" cy="782.5" rx="4.6" ry="2.4" fill="#fff"/>
<ellipse cx="769.3" cy="760.2" rx="2.4" ry="5.0" fill="#fff"/>
<ellipse cx="764.4" cy="708.2" rx="2.3" ry="3.7" fill="#fff"/>
<ellipse cx="600.9" cy="488.8" rx="4.9" ry="4.5" fill="#fff"/>
<ellipse cx="883.5" cy="760.9" rx="2.3" ry="2.5" fill="#fff"/>
<ellipse cx="811.4" cy="776.9" rx="2.0" ry="2.3" fill="#fff"/>
<ellipse cx="840.6" cy="778.9" rx="2.6" ry="3.3" fill="#fff"/>
<ellipse cx="751.6" cy="695.9" rx="2.2" ry="3.7" fill="#fff"/>
<ellipse cx="762.8" cy="642.4" rx="4.0" ry="3.1" fill="#fff"/>
<ellipse cx="656.8" cy="479.6" rx="2.9" ry="2.4" fill="#fff"/>
<ellipse cx="619.5" cy="447.6" rx="3.6" ry="3.5" fill="#fff"/>
<ellipse cx="810.1" cy="751.4" rx="4.7" ry="1.7" fill="#fff"/>
<ellipse cx="765.6" cy="701.8" rx="4.7" ry="1.9" fill="#fff"/>
<ellipse cx="799.6" cy="730.5" rx="2.2" ry="3.6" fill="#fff"/>
<ellipse cx="774.2" cy="754.4" rx="3.3" ry="1.7" fill="#fff"/>
<ellipse cx="843.0" cy="751.0" rx="4.0" ry="1.5" fill="#fff"/>
<ellipse cx="954.1" cy="782.6" rx="3.8" ry="2.1" fill="#fff"/>
<ellipse cx="608.7" cy="481.9" rx="4.6" ry="4.7" fill="#fff"/>
<ellipse cx="951.1" cy="797.3" rx="3.9" ry="3.9" fill="#fff"/>
<ellipse cx="801.8" cy="807.4" rx="4.6" ry="1.8" fill="#fff"/>
<ellipse cx="760.0" cy="704.4" rx="4.1" ry="4.8" fill="#fff"/>
<ellipse cx="894.6" cy="807.7" rx="3.6" ry="2.8" fill="#fff"/>
<ellipse cx="962.0" cy="758.6" rx="4.9" ry="3.1" fill="#fff"/>
<ellipse cx="963.4" cy="785.2" rx="4.8" ry="2.3" fill="#fff"/>
<ellipse cx="699.1" cy="631.3" rx="3.5" ry="2.1" fill="#fff"/>
<ellipse cx="633.9" cy="506.7" rx="2.7" ry="2.0" fill="#fff"/>
<ellipse cx="618.4" cy="500.8" rx="1.6" ry="1.7" fill="#fff"/>
<ellipse cx="589.2" cy="473.1" rx="4.4" ry="4.4" fill="#fff"/>
<ellipse cx="847.2" cy="742.0" rx="4.8" ry="1.9" fill="#fff"/>
<ellipse cx="705.1" cy="534.4" rx="4.7" ry="4.1" fill="#fff"/>
<ellipse cx="635.3" cy="498.0" rx="1.8" ry="1.8" fill="#fff"/>
<ellipse cx="968.7" cy="799.0" rx="2.4" ry="2.7" fill="#fff"/>
<ellipse cx="694.1" cy="528.7" rx="4.2" ry="3.6" fill="#fff"/>
<ellipse cx="751.5" cy="678.0" rx="2.9" ry="3.0" fill="#fff"/>
<ellipse cx="901.3" cy="792.6" rx="3.5" ry="4.0" fill="#fff"/>
<ellipse cx="910.7" cy="781.7" rx="1.5" ry="2.2" fill="#fff"/>
<ellipse cx="1001.5" cy="787.3" rx="1.8" ry="3.9" fill="#fff"/>
<ellipse cx="900.7" cy="790.8" rx="4.4" ry="2.4" fill="#fff"/>
<ellipse cx="671.1" cy="556.4" rx="3.2" ry="1.9" fill="#fff"/>
<ellipse cx="821.1" cy="791.0" rx="3.5" ry="1.9" fill="#fff"/>
<ellipse cx="687.8" cy="598.6" rx="4.6" ry="1.8" fill="#fff"/>
<ellipse cx="820.8" cy="784.1" rx="4.7" ry="3.3" fill="#fff"/>
<ellipse cx="730.0" cy="657.3" rx="1.9" ry="3.6" fill="#fff"/>
<ellipse cx="865.1" cy="774.1" rx="2.6" ry="2.0" fill="#fff"/>
<ellipse cx="934.5" cy="781.0" rx="3.1" ry="3.9" fill="#fff"/>
<ellipse cx="724.3" cy="616.9" rx="4.6" ry="2.3" fill="#fff"/>
<ellipse cx="665.4" cy="494.7" rx="3.7" ry="4.0" fill="#fff"/>
<ellipse cx="667.0" cy="541.1" rx="2.3" ry="4.8" fill="#fff"/>
<ellipse cx="723.0" cy="620.1" rx="4.9" ry="1.9" fill="#fff"/>
<ellipse cx="739.4" cy="651.3" rx="2.5" ry="2.5" fill="#fff"/>
<ellipse cx="644.7" cy="509.9" rx="2.9" ry="1.6" fill="#fff"/>
<ellipse cx="743.1" cy="686.2" rx="4.9" ry="2.5" fill="#fff"/>
<ellipse cx="593.2" cy="473.8" rx="4.1" ry="4.7" fill="#fff"/>
<ellipse cx="727.4" cy="658.5" rx="4.5" ry="3.8" fill="#fff"/>
<ellipse cx="889.6" cy="762.6" rx="4.5" ry="3.9" fill="#fff"/>
<ellipse cx="812.2" cy="778.6" rx="4.0" ry="4.6" fill="#fff"/>
<ellipse cx="676.6" cy="529.4" rx="2.4" ry="3.0" fill="#fff"/>
<ellipse cx="739.4" cy="614.3" rx="3.8" ry="4.6" fill="#fff"/>
<ellipse cx="875.2" cy="779.8" rx="4.7" ry="1.9" fill="#fff"/>
<ellipse cx="725.7" cy="626.9" rx="4.8" ry="3.3" fill="#fff"/>
<ellipse cx="634.8" cy="512.9" rx="3.2" ry="1.6" fill="#fff"/>
<ellipse cx="977.0" cy="778.1" rx="4.8" ry="2.2" fill="#fff"/>
<ellipse cx="788.0" cy="770.6" rx="4.1" ry="3.6" fill="#fff"/>
<ellipse cx="816.8" cy="789.3" rx="1.5" ry="3.0" fill="#fff"/>
<ellipse cx="736.2" cy="646.6" rx="1.9" ry="2.6" fill="#fff"/>
<ellipse cx="745.4" cy="684.3" rx="4.3" ry="2.9" fill="#fff"/>
<ellipse cx="666.9" cy="520.3" rx="4.3" ry="2.2" fill="#fff"/>
<ellipse cx="866.9" cy="828.8" rx="2.7" ry="3.7" fill="#fff"/>
<ellipse cx="939.9" cy="812.2" rx="4.2" ry="3.8" fill="#fff"/>
<ellipse cx="974.4" cy="808.3" rx="2.4" ry="2.8" fill="#fff"/>
<ellipse cx="715.5" cy="610.3" rx="4.3" ry="4.3" fill="#fff"/>
<ellipse cx="692.0" cy="600.4" rx="3.0" ry="3.7" fill="#fff"/>
<ellipse cx="895.5" cy="803.2" rx="2.8" ry="1.8" fill="#fff"/>
<ellipse cx="811.9" cy="752.8" rx="4.4" ry="3.7" fill="#fff"/>
<ellipse cx="637.9" cy="509.7" rx="2.5" ry="3.6" fill="#fff"/>
<ellipse cx="771.0" cy="732.4" rx="2.7" ry="2.0" fill="#fff"/>
<ellipse cx="771.4" cy="710.5" rx="3.6" ry="4.2" fill="#fff"/>
<ellipse cx="862.7" cy="783.1" rx="2.5" ry="3.2" fill="#fff"/>
<ellipse cx="672.6" cy="522.2" rx="4.6" ry="3.4" fill="#fff"/>
<ellipse cx="714.2" cy="574.2" rx="3.5" ry="3.2" fill="#fff"/>
<ellipse cx="679.7" cy="560.8" rx="3.6" ry="4.1" fill="#fff"/>
<ellipse cx="661.7" cy="561.7" rx="3.8" ry="4.4" fill="#fff"/>
<ellipse cx="731.9" cy="592.7" rx="2.1" ry="2.8" fill="#fff"/>
<ellipse cx="796.2" cy="753.3" rx="4.8" ry="2.7" fill="#fff"/>
<ellipse cx="589.8" cy="501.6" rx="1.6" ry="4.0" fill="#fff"/>
<ellipse cx="847.0" cy="787.7" rx="2.7" ry="4.2" fill="#fff"/>
<ellipse cx="807.1" cy="770.3" rx="3.0" ry="3.4" fill="#fff"/>
<ellipse cx="917.1" cy="805.2" rx="2.7" ry="4.9" fill="#fff"/>
<ellipse cx="982.2" cy="781.3" rx="4.3" ry="2.7" fill="#fff"/>
<ellipse cx="748.6" cy="646.1" rx="1.8" ry="5.0" fill="#fff"/>
<ellipse cx="767.3" cy="658.5" rx="1.7" ry="2.6" fill="#fff"/>
<ellipse cx="611.5" cy="463.2" rx="4.2" ry="1.7" fill="#fff"/>
<ellipse cx="791.0" cy="746.7" rx="3.7" ry="3.9" fill="#fff"/>
<ellipse cx="812.6" cy="762.7" rx="3.7" ry="3.7" fill="#fff"/>
<ellipse cx="660.6" cy="524.6" rx="4.2" ry="4.7" fill="#fff"/>
<ellipse cx="822.9" cy="763.2" rx="2.6" ry="4.0" fill="#fff"/>
<ellipse cx="917.6" cy="795.9" rx="3.0" ry="3.7" fill="#fff"/>
<ellipse cx="594.1" cy="492.8" rx="4.2" ry="3.0" fill="#fff"/>
<ellipse cx="885.6" cy="792.1" rx="2.9" ry="3.6" fill="#fff"/>
<ellipse cx="875.1" cy="795.4" rx="1.9" ry="3.8" fill="#fff"/>
<ellipse cx="673.1" cy="546.2" rx="1.5" ry="3.8" fill="#fff"/>
<ellipse cx="912.1" cy="784.8" rx="1.6" ry="4.0" fill="#fff"/>
<ellipse cx="669.3" cy="496.8" rx="2.8" ry="4.1" fill="#fff"/>
<ellipse cx="882.5" cy="782.2" rx="3.7" ry="4.0" fill="#fff"/>
<ellipse cx="779.1" cy="644.8" rx="1.7" ry="1.6" fill="#fff"/>
<ellipse cx="581.4" cy="453.6" rx="1.8" ry="2.6" fill="#fff"/>
<ellipse cx="896.0" cy="774.8" rx="3.6" ry="2.6" fill="#fff"/>
<ellipse cx="789.4" cy="750.3" rx="4.9" ry="1.9" fill="#fff"/>
<ellipse cx="834.7" cy="754.4" rx="4.2" ry="3.1" fill="#fff"/>
<ellipse cx="703.8" cy="609.9" rx="1.7" ry="4.9" fill="#fff"/>
<ellipse cx="849.8" cy="767.1" rx="4.0" ry="1.6" fill="#fff"/>
<ellipse cx="669.2" cy="562.8" rx="4.6" ry="2.8" fill="#fff"/>
<ellipse cx="846.9" cy="765.6" rx="3.1" ry="3.9" fill="#fff"/>
<ellipse cx="678.1" cy="593.3" rx="4.4" ry="4.6" fill="#fff"/>
<ellipse cx="639.9" cy="519.4" rx="5.0" ry="2.0" fill="#fff"/>
<ellipse cx="961.7" cy="771.8" rx="3.2" ry="3.4" fill="#fff"/>
<ellipse cx="794.0" cy="722.8" rx="4.1" ry="4.8" fill="#fff"/>
<ellipse cx="682.7" cy="536.9" rx="4.0" ry="4.7" fill="#fff"/>
<ellipse cx="806.5" cy="730.8" rx="1.8" ry="4.3" fill="#fff"/>
<ellipse cx="885.1" cy="805.1" rx="2.4" ry="4.4" fill="#fff"/>
<ellipse cx="696.8" cy="589.8" rx="2.2" ry="2.1" fill="#fff"/>
<ellipse cx="823.2" cy="768.7" rx="4.2" ry="4.5" fill="#fff"/>
<ellipse cx="674.0" cy="516.9" rx="1.9" ry="3.7" fill="#fff"/>
<ellipse cx="903.1" cy="795.9" rx="2.5" ry="3.6" fill="#fff"/>
<ellipse cx="637.9" cy="479.0" rx="3.2" ry="3.5" fill="#fff"/>
<ellipse cx="720.9" cy="633.2" rx="3.1" ry="3.6" fill="#fff"/>
<ellipse cx="812.9" cy="772.1" rx="2.2" ry="2.1" fill="#fff"/>
<ellipse cx="618.4" cy="484.7" rx="4.0" ry="3.2" fill="#fff"/>
<ellipse cx="1027.5" cy="788.9" rx="2.9" ry="1.9" fill="#fff"/>
<ellipse cx="590.5" cy="478.9" rx="4.8" ry="3.8" fill="#fff"/>
<ellipse cx="741.6" cy="626.9" rx="2.3" ry="4.0" fill="#fff"/>
<ellipse cx="655.7" cy="533.7" rx="4.7" ry="4.7" fill="#fff"/>
<ellipse cx="1005.1" cy="800.8" rx="4.1" ry="4.2" fill="#fff"/>
<ellipse cx="745.5" cy="657.2" rx="4.8" ry="3.9" fill="#fff"/>
<ellipse cx="686.2" cy="612.8" rx="3.1" ry="2.8" fill="#fff"/>
<ellipse cx="718.5" cy="638.7" rx="2.3" ry="2.0" fill="#fff"/>
<ellipse cx="847.4" cy="798.5" rx="4.3" ry="2.0" fill="#fff"/>
<ellipse cx="954.8" cy="775.1" rx="4.6" ry="2.0" fill="#fff"/>
<ellipse cx="774.4" cy="679.5" rx="1.6" ry="1.8" fill="#fff"/>
<ellipse cx="702.2" cy="594.8" rx="2.8" ry="2.7" fill="#fff"/>
<ellipse cx="814.4" cy="749.0" rx="2.0" ry="4.5" fill="#fff"/>
<ellipse cx="704.7" cy="596.3" rx="3.5" ry="2.5" fill="#fff"/>
<ellipse cx="899.6" cy="791.4" rx="4.7" ry="1.9" fill="#fff"/>
<ellipse cx="784.3" cy="678.2" rx="2.2" ry="3.2" fill="#fff"/>
<ellipse cx="695.6" cy="524.9" rx="3.0" ry="2.4" fill="#fff"/>
<ellipse cx="699.5" cy="569.8" rx="4.6" ry="1.7" fill="#fff"/>
<ellipse cx="909.1" cy="812.8" rx="3.0" ry="3.3" fill="#fff"/>
<ellipse cx="801.7" cy="701.6" rx="3.3" ry="2.2" fill="#fff"/>
<ellipse cx="714.2" cy="640.3" rx="2.1" ry="4.5" fill="#fff"/>
<ellipse cx="799.5" cy="740.1" rx="1.8" ry="1.8" fill="#fff"/>
<ellipse cx="801.0" cy="737.3" rx="2.0" ry="3.8" fill="#fff"/>
<ellipse cx="869.4" cy="782.6" rx="1.7" ry="4.1" fill="#fff"/>
<ellipse cx="773.3" cy="669.5" rx="2.7" ry="2.5" fill="#fff"/>
<ellipse cx="881.0" cy="790.0" rx="4.7" ry="3.2" fill="#fff"/>
<ellipse cx="975.8" cy="806.2" rx="4.9" ry="1.6" fill="#fff"/>
<ellipse cx="843.3" cy="777.6" rx="3.3" ry="3.1" fill="#fff"/>
<ellipse cx="755.5" cy="706.3" rx="4.4" ry="4.7" fill="#fff"/>
<ellipse cx="959.0" cy="802.7" rx="1.7" ry="4.6" fill="#fff"/>
<ellipse cx="832.5" cy="779.5" rx="3.4" ry="1.6" fill="#fff"/>
<ellipse cx="615.8" cy="495.5" rx="2.4" ry="4.4" fill="#fff"/>
<ellipse cx="627.5" cy="467.5" rx="2.4" ry="4.4" fill="#fff"/>
<ellipse cx="833.4" cy="779.2" rx="1.9" ry="4.5" fill="#fff"/>
<ellipse cx="826.4" cy="794.0" rx="3.6" ry="4.2" fill="#fff"/>
<ellipse cx="598.6" cy="489.7" rx="3.6" ry="4.5" fill="#fff"/>
<ellipse cx="660.8" cy="552.7" rx="4.8" ry="1.6" fill="#fff"/>
<ellipse cx="815.9" cy="795.4" rx="3.3" ry="2.9" fill="#fff"/>
<ellipse cx="904.6" cy="593.8" rx="1.8" ry="2.1" fill="#fff"/>
<ellipse cx="933.1" cy="731.9" rx="2.3" ry="3.4" fill="#fff"/>
<ellipse cx="908.0" cy="660.2" rx="1.9" ry="2.3" fill="#fff"/>
<ellipse cx="902.8" cy="536.7" rx="1.6" ry="2.1" fill="#fff"/>
<ellipse cx="941.1" cy="724.3" rx="3.0" ry="3.2" fill="#fff"/>
<ellipse cx="889.7" cy="479.9" rx="2.7" ry="1.7" fill="#fff"/>
<ellipse cx="904.8" cy="576.7" rx="2.1" ry="3.4" fill="#fff"/>
<ellipse cx="911.9" cy="639.8" rx="1.2" ry="3.4" fill="#fff"/>
<ellipse cx="898.4" cy="621.9" rx="2.1" ry="2.3" fill="#fff"/>
<ellipse cx="928.3" cy="745.2" rx="2.8" ry="2.9" fill="#fff"/>
<ellipse cx="924.1" cy="730.9" rx="2.6" ry="1.5" fill="#fff"/>
<ellipse cx="912.5" cy="681.2" rx="2.2" ry="1.8" fill="#fff"/>
<ellipse cx="903.1" cy="536.0" rx="3.4" ry="2.0" fill="#fff"/>
<ellipse cx="922.7" cy="640.6" rx="1.8" ry="1.7" fill="#fff"/>
<ellipse cx="899.3" cy="516.7" rx="1.2" ry="3.2" fill="#fff"/>
<ellipse cx="912.7" cy="710.5" rx="1.9" ry="2.9" fill="#fff"/>
<ellipse cx="903.6" cy="601.7" rx="2.0" ry="2.7" fill="#fff"/>
<ellipse cx="894.2" cy="564.1" rx="3.1" ry="2.3" fill="#fff"/>
<ellipse cx="910.7" cy="649.3" rx="2.8" ry="2.0" fill="#fff"/>
<ellipse cx="894.1" cy="470.0" rx="2.2" ry="3.4" fill="#fff"/>
<ellipse cx="904.4" cy="522.6" rx="2.5" ry="1.9" fill="#fff"/>
<ellipse cx="926.9" cy="724.2" rx="1.9" ry="2.3" fill="#fff"/>
<ellipse cx="940.8" cy="711.3" rx="3.5" ry="2.0" fill="#fff"/>
<ellipse cx="914.9" cy="650.0" rx="2.4" ry="2.5" fill="#fff"/>
<ellipse cx="898.4" cy="613.5" rx="2.5" ry="1.6" fill="#fff"/>
<ellipse cx="901.2" cy="656.4" rx="1.0" ry="1.1" fill="#fff"/>
<ellipse cx="912.5" cy="660.4" rx="2.5" ry="2.1" fill="#fff"/>
<ellipse cx="914.6" cy="682.9" rx="1.9" ry="3.4" fill="#fff"/>
<ellipse cx="909.3" cy="558.0" rx="2.0" ry="2.4" fill="#fff"/>
<ellipse cx="918.7" cy="601.1" rx="2.1" ry="2.6" fill="#fff"/>
<ellipse cx="928.5" cy="713.3" rx="1.9" ry="1.9" fill="#fff"/>
<ellipse cx="904.8" cy="595.3" rx="3.2" ry="2.7" fill="#fff"/>
<ellipse cx="912.6" cy="706.1" rx="1.5" ry="3.2" fill="#fff"/>
<ellipse cx="908.9" cy="637.6" rx="1.9" ry="3.5" fill="#fff"/>
<ellipse cx="906.7" cy="576.9" rx="2.8" ry="2.4" fill="#fff"/>
<ellipse cx="922.7" cy="676.5" rx="1.1" ry="1.4" fill="#fff"/>
<ellipse cx="940.5" cy="736.1" rx="1.4" ry="1.5" fill="#fff"/>
<ellipse cx="886.3" cy="499.2" rx="1.1" ry="1.2" fill="#fff"/>
<ellipse cx="920.8" cy="725.8" rx="1.2" ry="1.0" fill="#fff"/>
<ellipse cx="915.9" cy="646.6" rx="1.1" ry="2.6" fill="#fff"/>
<ellipse cx="892.1" cy="531.3" rx="1.1" ry="3.2" fill="#fff"/>
<ellipse cx="896.9" cy="537.4" rx="1.1" ry="3.3" fill="#fff"/>
<ellipse cx="910.8" cy="515.3" rx="1.8" ry="2.5" fill="#fff"/>
<ellipse cx="946.5" cy="762.1" rx="2.7" ry="2.5" fill="#fff"/>
<ellipse cx="925.9" cy="656.8" rx="3.0" ry="1.6" fill="#fff"/>
<ellipse cx="895.5" cy="504.5" rx="3.2" ry="2.0" fill="#fff"/>
<ellipse cx="907.0" cy="634.4" rx="2.0" ry="1.2" fill="#fff"/>
<ellipse cx="909.7" cy="533.8" rx="2.0" ry="2.2" fill="#fff"/>
<ellipse cx="929.2" cy="655.8" rx="1.9" ry="1.4" fill="#fff"/>
<ellipse cx="892.9" cy="508.0" rx="1.3" ry="2.1" fill="#fff"/>
<ellipse cx="888.3" cy="512.5" rx="1.9" ry="3.4" fill="#fff"/>
<ellipse cx="893.3" cy="522.4" rx="3.1" ry="2.7" fill="#fff"/>
<ellipse cx="903.7" cy="712.3" rx="2.3" ry="2.0" fill="#fff"/>
<ellipse cx="895.4" cy="485.5" rx="1.2" ry="3.1" fill="#fff"/>
<ellipse cx="911.8" cy="619.6" rx="1.0" ry="2.8" fill="#fff"/>
<ellipse cx="908.3" cy="593.8" rx="3.2" ry="1.2" fill="#fff"/>
<ellipse cx="931.6" cy="727.5" rx="2.8" ry="1.2" fill="#fff"/>
<ellipse cx="913.7" cy="631.3" rx="2.0" ry="3.3" fill="#fff"/>
<ellipse cx="914.2" cy="618.0" rx="3.0" ry="2.7" fill="#fff"/>
<ellipse cx="910.1" cy="615.0" rx="3.5" ry="2.0" fill="#fff"/>
<ellipse cx="630.3" cy="843.2" rx="2.8" ry="1.7" fill="#fff"/>
<ellipse cx="643.9" cy="839.3" rx="1.6" ry="1.9" fill="#fff"/>
<ellipse cx="647.5" cy="834.0" rx="3.8" ry="2.7" fill="#fff"/>
<ellipse cx="766.8" cy="814.8" rx="2.3" ry="3.1" fill="#fff"/>
<ellipse cx="661.3" cy="853.0" rx="3.0" ry="3.7" fill="#fff"/>
<ellipse cx="603.6" cy="805.0" rx="1.3" ry="3.4" fill="#fff"/>
<ellipse cx="735.0" cy="852.5" rx="2.3" ry="3.2" fill="#fff"/>
<ellipse cx="597.1" cy="816.3" rx="2.0" ry="3.8" fill="#fff"/>
<ellipse cx="639.2" cy="821.5" rx="3.5" ry="2.9" fill="#fff"/>
<ellipse cx="680.6" cy="831.7" rx="3.0" ry="3.5" fill="#fff"/>
<ellipse cx="787.0" cy="848.6" rx="3.5" ry="2.7" fill="#fff"/>
<ellipse cx="787.6" cy="819.8" rx="2.6" ry="1.7" fill="#fff"/>
<ellipse cx="801.8" cy="814.9" rx="2.9" ry="1.4" fill="#fff"/>
<ellipse cx="583.4" cy="788.4" rx="1.7" ry="2.5" fill="#fff"/>
<ellipse cx="706.3" cy="823.9" rx="1.4" ry="3.1" fill="#fff"/>
<ellipse cx="587.3" cy="824.2" rx="2.6" ry="3.3" fill="#fff"/>
<ellipse cx="777.9" cy="855.0" rx="3.5" ry="2.2" fill="#fff"/>
<ellipse cx="806.9" cy="819.8" rx="1.6" ry="1.2" fill="#fff"/>
<ellipse cx="710.6" cy="845.2" rx="3.9" ry="1.5" fill="#fff"/>
<ellipse cx="683.1" cy="844.5" rx="1.2" ry="1.0" fill="#fff"/>
<ellipse cx="715.6" cy="805.3" rx="2.7" ry="1.3" fill="#fff"/>
<ellipse cx="622.9" cy="841.5" rx="2.0" ry="2.1" fill="#fff"/>
<ellipse cx="742.5" cy="806.1" rx="3.0" ry="1.8" fill="#fff"/>
<ellipse cx="812.9" cy="804.9" rx="2.2" ry="1.4" fill="#fff"/>
<ellipse cx="698.3" cy="820.7" rx="3.8" ry="1.5" fill="#fff"/>
<ellipse cx="578.0" cy="777.9" rx="1.6" ry="3.5" fill="#fff"/>
<ellipse cx="726.9" cy="858.8" rx="3.5" ry="1.8" fill="#fff"/>
<ellipse cx="800.9" cy="799.5" rx="3.5" ry="3.1" fill="#fff"/>
<ellipse cx="720.8" cy="836.7" rx="1.5" ry="1.9" fill="#fff"/>
<ellipse cx="599.1" cy="807.9" rx="1.4" ry="2.9" fill="#fff"/>
<ellipse cx="734.4" cy="841.4" rx="1.6" ry="3.2" fill="#fff"/>
<ellipse cx="799.7" cy="791.5" rx="2.5" ry="1.4" fill="#fff"/>
<ellipse cx="748.0" cy="825.7" rx="2.0" ry="2.3" fill="#fff"/>
<ellipse cx="577.9" cy="798.0" rx="2.1" ry="1.0" fill="#fff"/>
<ellipse cx="577.7" cy="792.6" rx="2.6" ry="2.6" fill="#fff"/>
<ellipse cx="662.8" cy="826.9" rx="3.9" ry="3.9" fill="#fff"/>
<ellipse cx="641.0" cy="817.1" rx="2.0" ry="3.0" fill="#fff"/>
<ellipse cx="610.9" cy="800.6" rx="2.9" ry="1.9" fill="#fff"/>
<ellipse cx="666.7" cy="821.7" rx="1.7" ry="3.2" fill="#fff"/>
<ellipse cx="627.5" cy="824.9" rx="2.7" ry="2.2" fill="#fff"/>
<ellipse cx="613.5" cy="828.5" rx="1.7" ry="3.9" fill="#fff"/>
<ellipse cx="788.9" cy="838.6" rx="1.8" ry="1.3" fill="#fff"/>
<ellipse cx="588.2" cy="790.1" rx="2.4" ry="2.6" fill="#fff"/>
<ellipse cx="615.7" cy="831.7" rx="1.2" ry="2.2" fill="#fff"/>
<ellipse cx="757.4" cy="842.0" rx="2.5" ry="3.5" fill="#fff"/>
<ellipse cx="777.6" cy="822.1" rx="2.4" ry="3.1" fill="#fff"/>
<ellipse cx="642.3" cy="825.5" rx="3.3" ry="1.4" fill="#fff"/>
<ellipse cx="636.7" cy="848.0" rx="1.0" ry="2.8" fill="#fff"/>
<ellipse cx="783.3" cy="824.6" rx="3.7" ry="1.3" fill="#fff"/>
<ellipse cx="790.4" cy="811.6" rx="1.5" ry="3.2" fill="#fff"/>
<ellipse cx="657.5" cy="837.8" rx="1.8" ry="1.7" fill="#fff"/>
<ellipse cx="603.6" cy="788.1" rx="1.1" ry="2.8" fill="#fff"/>
<ellipse cx="780.4" cy="831.2" rx="1.1" ry="3.7" fill="#fff"/>
<ellipse cx="801.7" cy="825.6" rx="3.5" ry="2.7" fill="#fff"/>
<ellipse cx="744.1" cy="831.5" rx="1.8" ry="1.5" fill="#fff"/>
<ellipse cx="640.3" cy="819.8" rx="2.8" ry="1.8" fill="#fff"/>
<ellipse cx="582.1" cy="805.7" rx="1.1" ry="4.0" fill="#fff"/>
<ellipse cx="699.9" cy="823.6" rx="1.1" ry="1.5" fill="#fff"/>
<ellipse cx="579.1" cy="806.4" rx="1.5" ry="3.5" fill="#fff"/>
<ellipse cx="723.3" cy="834.7" rx="2.1" ry="2.6" fill="#fff"/>
<ellipse cx="646.5" cy="837.9" rx="1.5" ry="2.1" fill="#fff"/>
<ellipse cx="672.5" cy="844.2" rx="1.9" ry="2.0" fill="#fff"/>
<ellipse cx="713.2" cy="840.4" rx="4.0" ry="1.1" fill="#fff"/>
<ellipse cx="761.9" cy="838.3" rx="1.2" ry="4.0" fill="#fff"/>
<ellipse cx="649.2" cy="833.8" rx="4.0" ry="1.1" fill="#fff"/>
<ellipse cx="579.8" cy="788.5" rx="2.3" ry="2.7" fill="#fff"/>
<ellipse cx="783.1" cy="837.9" rx="3.6" ry="3.8" fill="#fff"/>
<ellipse cx="645.3" cy="833.0" rx="2.1" ry="3.6" fill="#fff"/>
<ellipse cx="776.8" cy="812.7" rx="1.2" ry="2.0" fill="#fff"/>
<ellipse cx="653.4" cy="825.9" rx="3.7" ry="3.4" fill="#fff"/>
<ellipse cx="981.7" cy="932.8" rx="3.8" ry="2.9" fill="#fff"/>
<ellipse cx="957.2" cy="952.9" rx="1.7" ry="2.6" fill="#fff"/>
<ellipse cx="944.9" cy="896.2" rx="4.9" ry="1.8" fill="#fff"/>
<ellipse cx="970.3" cy="852.1" rx="3.5" ry="5.0" fill="#fff"/>
<ellipse cx="940.2" cy="960.0" rx="4.7" ry="4.4" fill="#fff"/>
<ellipse cx="950.3" cy="992.6" rx="1.6" ry="2.1" fill="#fff"/>
<ellipse cx="974.7" cy="906.8" rx="3.1" ry="4.6" fill="#fff"/>
<ellipse cx="946.3" cy="965.5" rx="4.1" ry="4.9" fill="#fff"/>
<ellipse cx="956.2" cy="772.1" rx="2.7" ry="2.0" fill="#fff"/>
<ellipse cx="947.5" cy="819.2" rx="2.6" ry="1.6" fill="#fff"/>
<ellipse cx="966.7" cy="889.9" rx="2.9" ry="3.9" fill="#fff"/>
<ellipse cx="991.6" cy="874.9" rx="1.8" ry="3.6" fill="#fff"/>
<ellipse cx="915.8" cy="1013.9" rx="4.6" ry="1.6" fill="#fff"/>
<ellipse cx="967.0" cy="941.6" rx="3.6" ry="4.0" fill="#fff"/>
<ellipse cx="983.4" cy="898.7" rx="3.4" ry="4.4" fill="#fff"/>
<ellipse cx="934.8" cy="979.9" rx="3.6" ry="3.4" fill="#fff"/>
<ellipse cx="945.0" cy="882.9" rx="3.2" ry="1.6" fill="#fff"/>
<ellipse cx="931.9" cy="943.1" rx="3.5" ry="2.8" fill="#fff"/>
<ellipse cx="992.1" cy="895.7" rx="3.8" ry="4.2" fill="#fff"/>
<ellipse cx="958.7" cy="883.4" rx="4.9" ry="4.8" fill="#fff"/>
<ellipse cx="932.5" cy="806.5" rx="4.2" ry="2.4" fill="#fff"/>
<ellipse cx="986.4" cy="940.3" rx="4.5" ry="4.2" fill="#fff"/>
<ellipse cx="947.4" cy="809.3" rx="4.5" ry="2.2" fill="#fff"/>
<ellipse cx="942.9" cy="987.1" rx="4.3" ry="1.6" fill="#fff"/>
<ellipse cx="931.1" cy="790.8" rx="4.5" ry="1.7" fill="#fff"/>
<ellipse cx="1002.6" cy="904.0" rx="3.7" ry="2.3" fill="#fff"/>
<ellipse cx="971.1" cy="869.3" rx="2.7" ry="2.6" fill="#fff"/>
<ellipse cx="941.6" cy="1005.9" rx="2.3" ry="3.5" fill="#fff"/>
<ellipse cx="984.9" cy="825.8" rx="4.8" ry="2.0" fill="#fff"/>
<ellipse cx="957.8" cy="929.2" rx="4.6" ry="2.1" fill="#fff"/>
<ellipse cx="999.5" cy="913.4" rx="4.5" ry="4.1" fill="#fff"/>
<ellipse cx="974.8" cy="853.7" rx="4.5" ry="5.0" fill="#fff"/>
<ellipse cx="961.4" cy="945.6" rx="4.7" ry="2.0" fill="#fff"/>
<ellipse cx="970.5" cy="888.5" rx="2.1" ry="3.9" fill="#fff"/>
<ellipse cx="937.8" cy="812.4" rx="2.9" ry="2.7" fill="#fff"/>
<ellipse cx="968.1" cy="870.9" rx="1.6" ry="2.0" fill="#fff"/>
<ellipse cx="950.9" cy="818.4" rx="1.7" ry="4.6" fill="#fff"/>
<ellipse cx="985.9" cy="884.6" rx="2.0" ry="3.0" fill="#fff"/>
<ellipse cx="923.2" cy="811.5" rx="3.4" ry="5.0" fill="#fff"/>
<ellipse cx="961.0" cy="970.4" rx="4.9" ry="4.5" fill="#fff"/>
<ellipse cx="964.0" cy="869.6" rx="2.4" ry="1.7" fill="#fff"/>
<ellipse cx="977.2" cy="825.1" rx="4.8" ry="2.4" fill="#fff"/>
<ellipse cx="944.9" cy="937.2" rx="3.4" ry="3.9" fill="#fff"/>
<ellipse cx="957.2" cy="941.0" rx="4.9" ry="2.9" fill="#fff"/>
<ellipse cx="965.7" cy="940.7" rx="3.7" ry="2.3" fill="#fff"/>
<ellipse cx="950.7" cy="901.5" rx="4.4" ry="3.8" fill="#fff"/>
<ellipse cx="977.8" cy="829.0" rx="1.7" ry="3.9" fill="#fff"/>
<ellipse cx="932.9" cy="964.8" rx="3.1" ry="3.5" fill="#fff"/>
<ellipse cx="969.4" cy="945.0" rx="3.6" ry="5.0" fill="#fff"/>
<ellipse cx="978.2" cy="830.9" rx="2.7" ry="1.7" fill="#fff"/>
<ellipse cx="952.7" cy="933.2" rx="3.7" ry="3.4" fill="#fff"/>
<ellipse cx="973.7" cy="859.9" rx="4.4" ry="4.5" fill="#fff"/>
<ellipse cx="949.4" cy="939.3" rx="2.0" ry="4.7" fill="#fff"/>
<ellipse cx="929.4" cy="932.0" rx="2.3" ry="2.1" fill="#fff"/>
<ellipse cx="1004.1" cy="888.0" rx="3.8" ry="4.7" fill="#fff"/>
<ellipse cx="981.9" cy="893.0" rx="1.9" ry="2.0" fill="#fff"/>
<ellipse cx="948.1" cy="941.2" rx="3.3" ry="2.6" fill="#fff"/>
<ellipse cx="944.7" cy="840.9" rx="1.9" ry="3.7" fill="#fff"/>
<ellipse cx="982.6" cy="882.7" rx="2.8" ry="3.3" fill="#fff"/>
<ellipse cx="929.8" cy="845.1" rx="2.4" ry="3.4" fill="#fff"/>
<ellipse cx="610.8" cy="567.1" rx="3.2" ry="1.8" fill="#fff"/>
<ellipse cx="541.6" cy="576.2" rx="2.6" ry="2.5" fill="#fff"/>
<ellipse cx="516.2" cy="573.8" rx="2.9" ry="2.1" fill="#fff"/>
<ellipse cx="632.0" cy="566.6" rx="3.3" ry="3.9" fill="#fff"/>
<ellipse cx="623.8" cy="556.1" rx="2.2" ry="2.7" fill="#fff"/>
<ellipse cx="693.4" cy="553.5" rx="1.2" ry="1.6" fill="#fff"/>
<ellipse cx="498.4" cy="569.2" rx="2.2" ry="3.8" fill="#fff"/>
<ellipse cx="491.8" cy="556.7" rx="3.1" ry="2.3" fill="#fff"/>
<ellipse cx="536.1" cy="569.7" rx="1.4" ry="3.3" fill="#fff"/>
<ellipse cx="624.1" cy="554.5" rx="1.1" ry="3.0" fill="#fff"/>
<ellipse cx="644.9" cy="559.5" rx="1.7" ry="1.2" fill="#fff"/>
<ellipse cx="526.4" cy="574.6" rx="2.7" ry="1.2" fill="#fff"/>
<ellipse cx="629.5" cy="564.9" rx="3.1" ry="2.3" fill="#fff"/>
<ellipse cx="697.9" cy="545.5" rx="1.4" ry="2.0" fill="#fff"/>
<ellipse cx="517.1" cy="562.7" rx="1.3" ry="2.2" fill="#fff"/>
<ellipse cx="591.6" cy="564.2" rx="1.2" ry="1.9" fill="#fff"/>
<ellipse cx="655.6" cy="558.4" rx="1.6" ry="1.2" fill="#fff"/>
<ellipse cx="667.9" cy="551.1" rx="1.4" ry="3.8" fill="#fff"/>
<ellipse cx="542.8" cy="559.4" rx="1.2" ry="1.9" fill="#fff"/>
<ellipse cx="564.9" cy="561.7" rx="1.8" ry="3.4" fill="#fff"/>
<ellipse cx="538.5" cy="591.6" rx="2.8" ry="2.2" fill="#fff"/>
<ellipse cx="534.2" cy="571.6" rx="3.6" ry="1.4" fill="#fff"/>
<ellipse cx="674.9" cy="570.2" rx="1.5" ry="3.8" fill="#fff"/>
<ellipse cx="583.7" cy="551.7" rx="1.9" ry="1.6" fill="#fff"/>
<ellipse cx="526.8" cy="562.3" rx="1.3" ry="1.3" fill="#fff"/>
<ellipse cx="667.7" cy="571.6" rx="1.8" ry="3.7" fill="#fff"/>
<ellipse cx="537.1" cy="571.1" rx="1.1" ry="3.5" fill="#fff"/>
<ellipse cx="654.7" cy="551.8" rx="3.1" ry="3.2" fill="#fff"/>
<ellipse cx="663.9" cy="581.3" rx="1.5" ry="3.4" fill="#fff"/>
<ellipse cx="579.1" cy="567.2" rx="2.9" ry="1.7" fill="#fff"/>
<ellipse cx="535.0" cy="570.7" rx="2.0" ry="2.2" fill="#fff"/>
<ellipse cx="672.4" cy="580.1" rx="4.0" ry="3.8" fill="#fff"/>
<ellipse cx="540.0" cy="579.0" rx="2.5" ry="3.8" fill="#fff"/>
<ellipse cx="530.1" cy="573.9" rx="2.8" ry="3.3" fill="#fff"/>
<ellipse cx="516.9" cy="586.7" rx="3.5" ry="1.7" fill="#fff"/>
<ellipse cx="477.1" cy="550.7" rx="2.0" ry="3.8" fill="#fff"/>
<ellipse cx="496.5" cy="575.4" rx="1.7" ry="3.2" fill="#fff"/>
<ellipse cx="522.7" cy="549.9" rx="3.2" ry="2.4" fill="#fff"/>
<ellipse cx="638.8" cy="558.1" rx="1.1" ry="2.5" fill="#fff"/>
<ellipse cx="570.4" cy="555.4" rx="3.5" ry="1.2" fill="#fff"/>
<ellipse cx="560.9" cy="561.6" rx="1.0" ry="2.9" fill="#fff"/>
<ellipse cx="551.7" cy="570.1" rx="1.7" ry="1.5" fill="#fff"/>
<ellipse cx="606.4" cy="572.5" rx="1.5" ry="2.6" fill="#fff"/>
<ellipse cx="567.9" cy="574.9" rx="1.6" ry="1.4" fill="#fff"/>
<ellipse cx="628.6" cy="562.9" rx="1.3" ry="1.3" fill="#fff"/>
<ellipse cx="592.0" cy="552.5" rx="3.1" ry="1.7" fill="#fff"/>
<ellipse cx="522.2" cy="568.2" rx="2.2" ry="2.6" fill="#fff"/>
<ellipse cx="615.5" cy="575.0" rx="1.7" ry="1.7" fill="#fff"/>
<ellipse cx="662.8" cy="568.4" rx="1.3" ry="1.6" fill="#fff"/>
<ellipse cx="643.3" cy="579.6" rx="2.4" ry="3.8" fill="#fff"/>
<ellipse cx="572.5" cy="910.7" rx="1.1" ry="3.0" fill="#fff"/>
<ellipse cx="594.1" cy="925.8" rx="1.9" ry="1.4" fill="#fff"/>
<ellipse cx="609.7" cy="920.4" rx="1.2" ry="1.0" fill="#fff"/>
<ellipse cx="513.4" cy="909.4" rx="1.2" ry="2.5" fill="#fff"/>
<ellipse cx="524.5" cy="899.5" rx="3.0" ry="1.2" fill="#fff"/>
<ellipse cx="585.8" cy="914.3" rx="2.9" ry="2.2" fill="#fff"/>
<ellipse cx="631.0" cy="924.8" rx="2.9" ry="3.1" fill="#fff"/>
<ellipse cx="575.3" cy="904.3" rx="3.2" ry="1.7" fill="#fff"/>
<ellipse cx="531.6" cy="890.9" rx="2.9" ry="3.1" fill="#fff"/>
<ellipse cx="532.3" cy="918.2" rx="2.2" ry="3.3" fill="#fff"/>
<ellipse cx="565.7" cy="900.9" rx="2.7" ry="3.4" fill="#fff"/>
<ellipse cx="577.6" cy="931.3" rx="3.1" ry="1.8" fill="#fff"/>
<ellipse cx="617.2" cy="934.2" rx="1.0" ry="1.3" fill="#fff"/>
<ellipse cx="553.5" cy="914.4" rx="1.8" ry="1.5" fill="#fff"/>
<ellipse cx="558.3" cy="922.5" rx="1.8" ry="3.5" fill="#fff"/>
<ellipse cx="577.1" cy="937.3" rx="3.0" ry="1.3" fill="#fff"/>
<ellipse cx="568.9" cy="914.1" rx="1.8" ry="1.4" fill="#fff"/>
<ellipse cx="556.2" cy="906.2" rx="3.2" ry="2.0" fill="#fff"/>
<ellipse cx="568.6" cy="904.7" rx="2.5" ry="3.1" fill="#fff"/>
<ellipse cx="584.5" cy="923.1" rx="1.3" ry="1.6" fill="#fff"/>
<ellipse cx="581.9" cy="901.1" rx="2.8" ry="2.9" fill="#fff"/>
<ellipse cx="534.4" cy="904.9" rx="2.0" ry="2.3" fill="#fff"/>
<ellipse cx="577.6" cy="920.3" rx="2.7" ry="2.6" fill="#fff"/>
<ellipse cx="620.0" cy="934.2" rx="2.6" ry="2.2" fill="#fff"/>
<ellipse cx="535.2" cy="896.0" rx="2.4" ry="2.1" fill="#fff"/>
<ellipse cx="596.5" cy="928.7" rx="1.8" ry="1.3" fill="#fff"/>
<ellipse cx="521.8" cy="906.1" rx="1.1" ry="2.0" fill="#fff"/>
<ellipse cx="586.9" cy="949.5" rx="1.1" ry="2.4" fill="#fff"/>
<ellipse cx="594.2" cy="912.5" rx="2.0" ry="3.4" fill="#fff"/>
<ellipse cx="591.3" cy="937.8" rx="2.4" ry="3.1" fill="#fff"/>
</g>
<ellipse cx="727" cy="632" rx="17" ry="24" fill="#fff"/>
<ellipse cx="712" cy="600" rx="9" ry="12" fill="#fff"/>
<ellipse cx="672" cy="545" rx="9" ry="12" fill="#fff"/>
<ellipse cx="640" cy="505" rx="10" ry="7" fill="#fff"/>
<ellipse cx="606" cy="486" rx="6" ry="5" fill="#fff"/>
<ellipse cx="812" cy="760" rx="15" ry="17" fill="#fff"/>
<ellipse cx="825" cy="783" rx="13" ry="8" fill="#fff"/>
<ellipse cx="895" cy="795" rx="20" ry="10" fill="#fff"/>
<ellipse cx="986" cy="678" rx="5" ry="4" fill="#fff"/>
<ellipse cx="717" cy="838" rx="20" ry="10" fill="#fff"/>
<ellipse cx="700" cy="660" rx="7" ry="7" fill="#fff"/>
<ellipse cx="766" cy="705" rx="9" ry="10" fill="#fff"/>
<g stroke="#2c2c2c" stroke-width="2.5" stroke-linecap="round"><line x1="2092" y1="211" x2="2102" y2="221"/><line x1="2102" y1="211" x2="2092" y2="221"/></g>
<rect x="2087.5" y="206" width="19" height="19" rx="4" fill="none" stroke="#2c2c2c" stroke-width="2"/>
<path d="M1209,260 L1217,279 L1225,258 L1233,257" fill="none" stroke="#a8a8a0" stroke-width="1.5"/>
<circle cx="1209" cy="260" r="2" fill="#eee" stroke="#888" stroke-width="1"/>
<circle cx="1217" cy="279" r="2" fill="#eee" stroke="#888" stroke-width="1"/>
<circle cx="1225" cy="258" r="2" fill="#eee" stroke="#888" stroke-width="1"/>
<circle cx="1233" cy="257" r="2" fill="#eee" stroke="#888" stroke-width="1"/>
<path d="M2084.0,265.0 H2092.0 L2088,272.0 Z" fill="#c8c8c8"/>
<g fill="#1fbd55" stroke="#0a5a2a" stroke-width="1"><rect x="1303" y="333" width="16" height="6"/><rect x="1310" y="343" width="16" height="6"/><rect x="1303" y="353" width="16" height="6"/></g>
<path d="M2079.0,344.0 H2087.0 L2083,351.0 Z" fill="#c8c8c8"/>
<g transform="translate(1208,314) scale(1.0)"><path d="M17,10.6 L38.3,19 L35.9,27 L13.9,17.9 Z" fill="#f7e85a"/><path d="M13.9,17.9 L35.9,27 L33.4,35 L10.8,25.2 Z" fill="#82aee0"/><path d="M10.8,25.2 L33.4,35 L31,43 L7.7,32.5 Z" fill="#ec3a30"/><line x1="37" y1="25" x2="49.6" y2="11.2" stroke="#8a5a10" stroke-width="5" stroke-linecap="round"/><line x1="37" y1="25" x2="49.6" y2="11.2" stroke="#e0a850" stroke-width="3" stroke-linecap="round"/><path d="M25,24.5 L29.5,20 L43.5,31.5 L39,36 Z" fill="#dca04c" stroke="#8a5a10" stroke-width="1"/><path d="M19.3,31.5 L27.5,23.5 L40.5,35 L32,43.7 Z" fill="#ecc88c" stroke="#8a5a10" stroke-width="1"/><g stroke="#b88440" stroke-width="0.9"><line x1="22" y1="29" x2="34.5" y2="41"/><line x1="24.5" y1="26.5" x2="37" y2="38.5"/><line x1="27" y1="24.5" x2="39" y2="36"/></g></g>
<path d="M1217,400 L1225,389 H1259 V411 H1225 Z" fill="#fde74c" stroke="#c9a400" stroke-width="2"/>
<text x="1225" y="407" font-family="Liberation Mono" font-size="17" fill="#111">abc</text>
<rect x="1215" y="446" width="46" height="26" rx="13" fill="#eef2fa" stroke="#cfd8ea" stroke-width="1.5"/>
<text x="1217" y="467" font-family="Liberation Sans" font-weight="bold" font-size="21" fill="#1e1e1e">abc</text>
<path d="M1237.5,499.5 L1254,510 L1239,520.5 L1222,509.5 Z" fill="#f49090" stroke="#c00000" stroke-width="2.3" stroke-linejoin="round"/>
<path d="M1219.5,513.5 L1236,524.5 V541.5 L1219.5,530.5 Z" fill="#8ae63a" stroke="#4aa010" stroke-width="2.3" stroke-linejoin="round"/>
<path d="M1241,524.5 L1257.5,513.5 V530.5 L1241,541.5 Z" fill="#fde74c" stroke="#d0a000" stroke-width="2.3" stroke-linejoin="round"/>
<path d="M1222,568 L1243,563 L1260,568 L1259,592 L1240,597 L1215,590 Z" fill="#bdbdbd" stroke="#8a8a8a" stroke-width="1.2"/>
<g stroke="#8a8a8a" stroke-width="1" fill="none"><path d="M1218,580 L1260,578"/><path d="M1235,566 L1232,595"/><path d="M1248,565 L1250,594"/></g>
<rect x="1228" y="617" width="19" height="13" fill="#e05050"/><rect x="1236" y="630" width="3" height="8" fill="#d09030"/>
<path d="M1223,655 V640 H1252 V655" fill="none" stroke="#d09030" stroke-width="3"/>
<rect x="1215" y="650" width="17" height="14" fill="#f5d030"/><rect x="1244" y="650" width="17" height="14" fill="#7ab0e0"/>
<path d="M1224,700 C1222,688 1232,684 1242,688 L1244,683 L1252,693 L1240,697 L1242,692 C1234,690 1230,694 1232,702 Z" fill="#6cbf6c" stroke="#3a8a3a" stroke-width="1"/>
<path d="M1252,702 C1256,714 1248,722 1236,716 L1234,721 L1226,710 L1238,706 L1236,711 C1244,714 1248,710 1246,704 Z" fill="#f08030" stroke="#b05010" stroke-width="1"/>
<path d="M1521.5,400 H1532.5 L1527,410.5 Z" fill="#6a6a6a"/>
<path d="M2084,405 L2094,405" stroke="#6a6a6a" stroke-width="0"/>
<path d="M2077.5,522 V517 a4,4 0 0 1 8,0 V522" fill="none" stroke="#e8e8e8" stroke-width="1.5"/><rect x="2076" y="522.5" width="8" height="14" fill="#e8c820" stroke="#a08000"/>
<path d="M2078,416 L2086,404 L2093,416 Z" fill="#7e8286"/><path d="M2078,454 L2086,466 L2093,454 Z" fill="#7e8286"/>
<path d="M2085.5,531.0 H2091.5 L2088.5,537.0 Z" fill="#b0b0b0"/>
<path d="M1965.5,743.0 H1973.5 L1969.5,750.0 Z" fill="#c8c8c8"/>
<path d="M2012,730.5 L2005,745.5 L2012,760.5 Z" fill="#9aa0a8" stroke="#6a6a6a" stroke-width="1"/>
<rect x="2012" y="730.5" width="25" height="31" fill="#e4e4e4" stroke="#a8a8a0" stroke-width="1.3"/>
<line x1="2012" y1="746.0" x2="2037" y2="746.0" stroke="#a8a8a0" stroke-width="1.3"/>
<rect x="2018" y="736.5" width="14" height="4" rx="2" fill="#4a4a4a"/><line x1="2018" y1="752.5" x2="2032" y2="752.5" stroke="#4a4a4a" stroke-width="1.8"/>
<path d="M2043.5,754.25 H2050.5 L2047,760.75 Z" fill="#b0b0b0"/>
<path d="M2012,796.5 L2005,811.5 L2012,826.5 Z" fill="#9aa0a8" stroke="#6a6a6a" stroke-width="1"/>
<rect x="2012" y="796.5" width="25" height="31" fill="#e4e4e4" stroke="#a8a8a0" stroke-width="1.3"/>
<line x1="2012" y1="812.0" x2="2037" y2="812.0" stroke="#a8a8a0" stroke-width="1.3"/>
<rect x="2018" y="802.5" width="14" height="4" rx="2" fill="#4a4a4a"/><line x1="2018" y1="818.5" x2="2032" y2="818.5" stroke="#4a4a4a" stroke-width="1.8"/>
<path d="M2043.5,820.25 H2050.5 L2047,826.75 Z" fill="#b0b0b0"/>
<path d="M1629,811.5 L1636,802 H1654 V821.5 H1636 Z" fill="#9a9a9a"/>
<g stroke="#fff" stroke-width="2" stroke-linecap="round"><line x1="1639" y1="806" x2="1648" y2="816"/><line x1="1648" y1="806" x2="1639" y2="816"/></g>
<path d="M1682.5,809 L1687,802 L1691.5,809 Z" fill="#c8c8c8"/><path d="M1682.5,815 L1687,822 L1691.5,815 Z" fill="#c8c8c8"/>
<path d="M2070.5,965 L2075,958 L2079.5,965 Z" fill="#c8c8c8"/><path d="M2070.5,971 L2075,978 L2079.5,971 Z" fill="#c8c8c8"/>
<path d="M1396.5,1315 L1401,1308 L1405.5,1315 Z" fill="#c8c8c8"/><path d="M1396.5,1321 L1401,1328 L1405.5,1321 Z" fill="#c8c8c8"/>
<path d="M1670.5,1315 L1675,1308 L1679.5,1315 Z" fill="#c8c8c8"/><path d="M1670.5,1321 L1675,1328 L1679.5,1321 Z" fill="#c8c8c8"/>
<path d="M1965.5,809.0 H1973.5 L1969.5,816.0 Z" fill="#c8c8c8"/>
<path d="M1296.5,906.5 H1316.5 L1306.5,920.5 Z" fill="#555" stroke="#222" stroke-width="1.5" stroke-linejoin="round"/>
<path d="M1777.5,1059.75 H1784.5 L1781,1066.25 Z" fill="#c8c8c8"/>
<path d="M2072.0,1059.75 H2079.0 L2075.5,1066.25 Z" fill="#c8c8c8"/>
<path d="M2066,1103 L2069,1110 L2076.5,1110.5 L2070.5,1115 L2072.5,1122.5 L2066,1118.5 L2059.5,1122.5 L2061.5,1115 L2055.5,1110.5 L2063,1110 Z" fill="#8a8672" stroke="#c8c8c0" stroke-width="1"/>
<text x="2052" y="1164" font-family="Liberation Sans" font-size="14" fill="none" stroke="#8a6868" stroke-width="0.8">A</text>
<text x="2052" y="1178" font-family="Liberation Sans" font-size="14" fill="none" stroke="#68788a" stroke-width="0.8">Z</text>
<path d="M2072,1153 V1176 M2066,1170 L2072,1177 L2078,1170" fill="none" stroke="#7e868e" stroke-width="1.5"/>
<path d="M1298,1255 L1305,1244 V1249 C1315,1248 1320,1254 1316,1262 C1313,1267 1308,1267 1305,1266 L1306,1262 C1310,1262 1312,1259 1311,1256 C1309,1253 1306,1253 1305,1254 V1259 Z" fill="#f07a30" stroke="#c05a10" stroke-width="0.8"/>
<path d="M1380,1252 L1373,1241 V1246 C1363,1245 1357,1251 1361,1260 C1364,1265 1368,1265 1371,1264 L1370,1260 C1366,1260 1365,1257 1366,1254 C1368,1251 1371,1251 1373,1252 V1257 Z" fill="#80c080" stroke="#4a9a4a" stroke-width="0.8"/>
<path d="M1829,1256 L1835,1263.5 L1845,1249" fill="none" stroke="#333" stroke-width="3.2" stroke-linecap="round" stroke-linejoin="round"/>
<circle cx="26.5" cy="1314.5" r="6.5" fill="none" stroke="#8a8a8a" stroke-width="2"/><line x1="31" y1="1319" x2="38" y2="1326" stroke="#8a8a8a" stroke-width="2.5" stroke-linecap="round"/>
<g transform="rotate(-25 836 1318)"><rect x="827" y="1303" width="17" height="30" rx="8.5" fill="#eee" stroke="#111" stroke-width="2"/><line x1="827" y1="1315" x2="844" y2="1315" stroke="#111" stroke-width="1.5"/><line x1="835.5" y1="1303" x2="835.5" y2="1315" stroke="#111" stroke-width="1.5"/><circle cx="835.5" cy="1323" r="3" fill="none" stroke="#111" stroke-width="1.5"/></g>
<path d="M843,1305 L851,1300" stroke="#111" stroke-width="1" stroke-dasharray="2,2"/>
<path d="M1073.0,1315.0 H1081.0 L1077,1322.0 Z" fill="#c8c8c8"/>
<path d="M1123,1319 V1312 a7,7 0 0 1 14,0 V1319" fill="none" stroke="#eee" stroke-width="2.8"/>
<rect x="1118.5" y="1319" width="24" height="15" rx="3" fill="#6a6a6a"/>
<circle cx="1862" cy="1317.5" r="12" fill="none" stroke="#eee" stroke-width="2"/>
<g stroke="#eee" stroke-width="1.6" fill="none"><ellipse cx="1862" cy="1317.5" rx="5" ry="12"/><line x1="1850" y1="1317.5" x2="1874" y2="1317.5"/><line x1="1852" y1="1311" x2="1872" y2="1311"/><line x1="1852" y1="1324" x2="1872" y2="1324"/></g>
<path d="M2053,1318 C2049,1308 2060,1303.5 2066,1303.5 C2075,1303.5 2082,1309 2082,1316 C2082,1324 2075,1328 2068,1328 L2074,1334 L2062,1328 C2058,1328 2055,1324 2053,1318 Z" fill="#6a6a6a"/>
<g fill="#fff"><circle cx="2058" cy="1317" r="2.5"/><circle cx="2066" cy="1317" r="2.5"/><circle cx="2074" cy="1317" r="2.5"/></g>
</svg>
</body></html>
